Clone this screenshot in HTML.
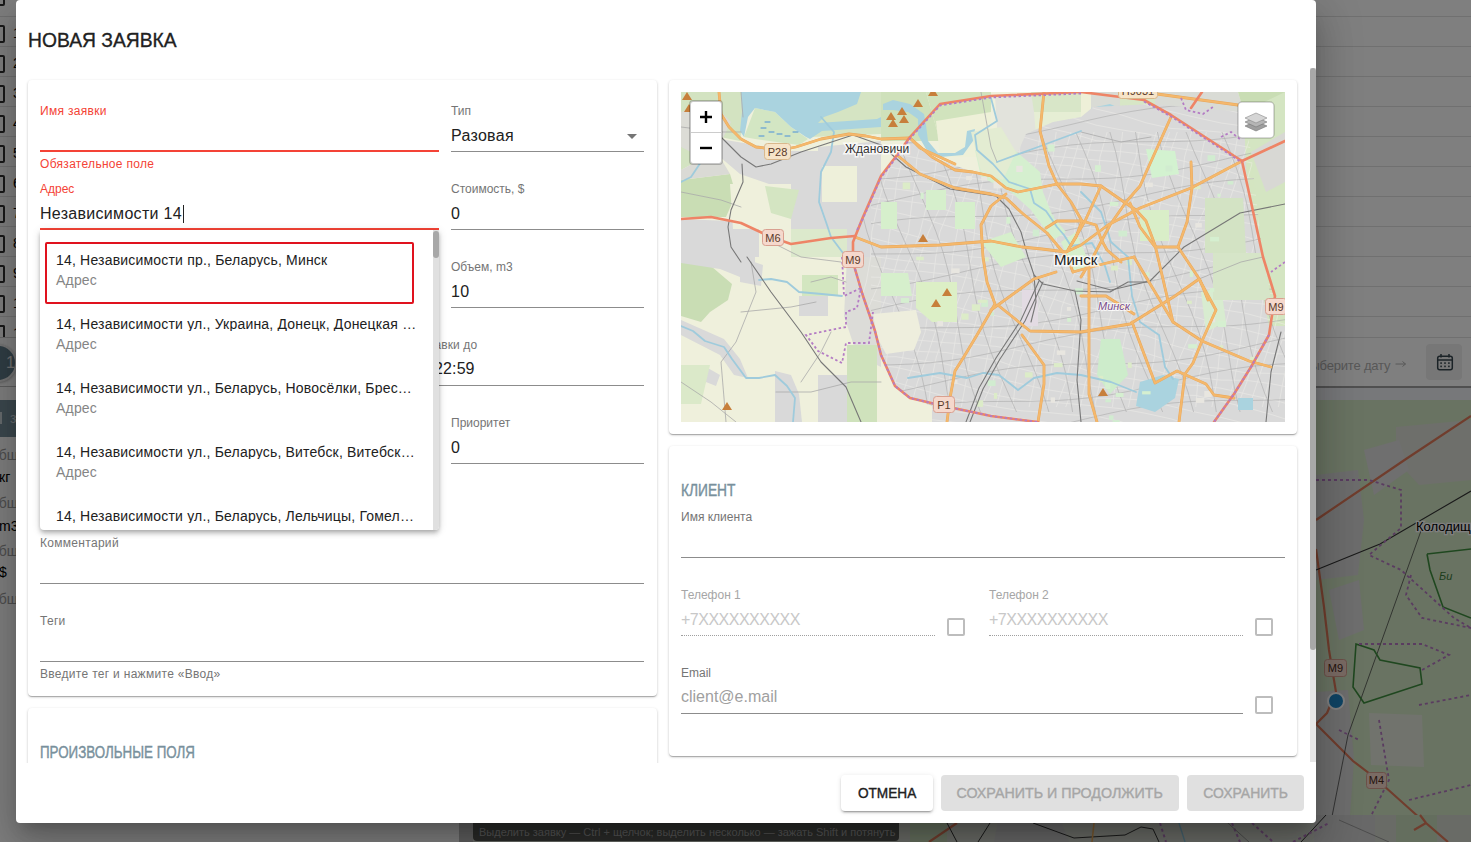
<!DOCTYPE html>
<html><head><meta charset="utf-8">
<style>
*{box-sizing:border-box;margin:0;padding:0}
html,body{width:1471px;height:842px;overflow:hidden;font-family:"Liberation Sans",sans-serif;background:#7f7f7f;position:relative}
#bg{position:absolute;left:0;top:0;width:1471px;height:842px;background:#7f7f7f;overflow:hidden}
.rl{position:absolute;left:0;width:1471px;height:1px;background:#e0e0e0}
.cbx{position:absolute;left:-13px;width:18px;height:18px;border:2px solid #333;border-radius:2px}
#dlg{position:absolute;left:16px;top:0px;width:1300px;height:823px;background:#fff;border-radius:4px;box-shadow:0 11px 15px -7px rgba(0,0,0,.2),0 24px 38px 3px rgba(0,0,0,.14),0 9px 46px 8px rgba(0,0,0,.12)}
.t{position:absolute;white-space:nowrap;line-height:1}
.card{position:absolute;background:#fff;border-radius:4px;box-shadow:0 1px 3px 0 rgba(0,0,0,.2),0 1px 1px 0 rgba(0,0,0,.14),0 2px 1px -1px rgba(0,0,0,.12)}
.lbl{font-size:12px;color:#757575;letter-spacing:0.3px}
.val{font-size:16px;color:#212121;letter-spacing:0.3px}
.ul{position:absolute;height:1px;background:#8c8c8c}
.err{color:#f44336}
.btn{position:absolute;font-size:15px;border-radius:4px;text-align:center;line-height:36px;white-space:nowrap}
.btn span{display:inline-block;-webkit-text-stroke:0.4px currentColor}
#scroll{position:absolute;left:16px;top:68px;width:1300px;height:695px;overflow:hidden}
#inner{position:absolute;left:-16px;top:-68px;width:1471px;height:842px}
.it{font-size:14px;color:#212121;letter-spacing:0.19px;width:361px;overflow:hidden;text-overflow:ellipsis}
.ad{font-size:14px;color:#858585;letter-spacing:0.19px}
.cb{position:absolute;width:18px;height:18px;border:2px solid #bdbdbd;border-radius:2px}
.hdr{font-size:16px;color:#78909c;-webkit-text-stroke:0.4px #78909c;transform-origin:0 0}
</style></head><body>
<div id="bg">
  <div style="position:absolute;left:0;top:0;width:1471px;height:842px;background:#fff"></div>
  <!-- table rows -->
  <div class="rl" style="top:16px"></div><div class="rl" style="top:46px"></div><div class="rl" style="top:76px"></div>
  <div class="rl" style="top:106px"></div><div class="rl" style="top:136px"></div><div class="rl" style="top:166px"></div>
  <div class="rl" style="top:196px"></div><div class="rl" style="top:226px"></div><div class="rl" style="top:256px"></div>
  <div class="rl" style="top:286px"></div><div class="rl" style="top:316px"></div>
  <div class="rl" style="top:337px;left:1316px;width:155px"></div>
  <div class="rl" style="top:337px;left:0;width:16px;background:#d0d0d0"></div>
  <!-- checkboxes left -->
  <div class="cbx" style="top:-12px"></div><div class="cbx" style="top:25px"></div><div class="cbx" style="top:55px"></div>
  <div class="cbx" style="top:85px"></div><div class="cbx" style="top:115px"></div><div class="cbx" style="top:145px"></div>
  <div class="cbx" style="top:175px"></div><div class="cbx" style="top:205px"></div><div class="cbx" style="top:235px"></div>
  <div class="cbx" style="top:265px"></div><div class="cbx" style="top:295px"></div><div class="cbx" style="top:325px;height:12px;border-bottom:none;border-radius:2px 2px 0 0"></div>
  <div class="t" style="left:13px;top:26px;font-size:14px;color:#000">1</div>
  <div class="t" style="left:13px;top:56px;font-size:14px;color:#000">2</div>
  <div class="t" style="left:13px;top:86px;font-size:14px;color:#000">3</div>
  <div class="t" style="left:13px;top:116px;font-size:14px;color:#000">4</div>
  <div class="t" style="left:13px;top:146px;font-size:14px;color:#000">5</div>
  <div class="t" style="left:13px;top:176px;font-size:14px;color:#000">6</div>
  <div class="t" style="left:13px;top:206px;font-size:14px;color:#000">7</div>
  <div class="t" style="left:13px;top:236px;font-size:14px;color:#000">8</div>
  <div class="t" style="left:13px;top:266px;font-size:14px;color:#000">9</div>
  <div class="t" style="left:13px;top:296px;font-size:14px;color:#000">1</div>
  <div style="position:absolute;left:0;top:316px;width:459px;height:21px;overflow:hidden"><div class="t" style="left:13px;top:10px;font-size:14px;color:#000">1</div></div>
  <!-- pagination circle -->
  <div style="position:absolute;left:-21px;top:344px;width:38px;height:38px;border-radius:50%;background:#607d8b;border:2px solid #e8e8e8;box-shadow:0 1px 3px rgba(0,0,0,.3)"></div>
  <div class="t" style="left:6px;top:355px;font-size:16px;color:#e0e0e0">1</div>
  <div style="position:absolute;left:0;top:386px;width:459px;height:1px;background:#bdbdbd"></div>
  <!-- dark band -->
  <div style="position:absolute;left:0;top:400px;width:459px;height:37px;background:#78909c"></div>
  <div class="t" style="left:10px;top:411px;font-size:14px;color:#cfd8dc">з</div>
  <div style="position:absolute;left:0;top:412px;width:2px;height:12px;background:#cfd8dc"></div>
  <div class="t" style="left:-9px;top:448px;font-size:14px;color:#9e9e9e">общ</div>
  <div class="t" style="left:-1px;top:470px;font-size:14px;color:#000">кг</div>
  <div class="t" style="left:-9px;top:496px;font-size:14px;color:#9e9e9e">общ</div>
  <div class="t" style="left:-1px;top:519px;font-size:14px;color:#000">m3</div>
  <div class="t" style="left:-9px;top:544px;font-size:14px;color:#9e9e9e">общ</div>
  <div class="t" style="left:-1px;top:565px;font-size:14px;color:#000">$</div>
  <div class="t" style="left:-9px;top:592px;font-size:14px;color:#9e9e9e">общ</div>
  <!-- right date row -->
  <div class="t" style="left:1302px;top:359px;font-size:13px;color:#b0b0b0;letter-spacing:-0.2px">Выберите дату</div>
  <svg style="position:absolute;left:1395px;top:360px" width="12" height="8"><path d="M0.5 4 H10.5 M7.5 1.5 L10.5 4 L7.5 6.5" fill="none" stroke="#b0b0b0" stroke-width="1"/></svg>
  <div style="position:absolute;left:1426px;top:344px;width:36px;height:36px;border-radius:4px;background:#eeeeee"></div>
  <svg style="position:absolute;left:1436px;top:353px" width="18" height="18" viewBox="0 0 18 18"><rect x="1.7" y="3.2" width="14.6" height="13.6" rx="2" fill="none" stroke="#37474f" stroke-width="1.5"/><path d="M1.7 7 H16.3" stroke="#37474f" stroke-width="1.5"/><path d="M5 1 V4.5 M13 1 V4.5" stroke="#37474f" stroke-width="1.5"/><g fill="#37474f"><rect x="4.3" y="9.3" width="1.6" height="1.6"/><rect x="8.2" y="9.3" width="1.6" height="1.6"/><rect x="12.1" y="9.3" width="1.6" height="1.6"/><rect x="4.3" y="12.6" width="1.6" height="1.6"/><rect x="8.2" y="12.6" width="1.6" height="1.6"/><rect x="12.1" y="12.6" width="1.6" height="1.6"/></g></svg>
  <div style="position:absolute;left:1316px;top:386px;width:155px;height:2px;background:#a0a0a0"></div>
  <div style="position:absolute;left:1316px;top:388px;width:155px;height:12px;background:#eef1f4"></div>
  <!-- background map -->
  <div style="position:absolute;left:459px;top:400px;width:1012px;height:442px;background:#d5e7c6;overflow:hidden">
    <svg width="1012" height="442" style="position:absolute;left:0;top:0">
<rect width="1012" height="442" fill="#d3e6c5"/>
<path d="M0 0 L857 0 L857 442 L0 442 Z" fill="#d6dcd2"/>
<path d="M857 75 L899 70 L905 120 L899 175 L857 180 Z" fill="#d9d9d9"/>
<path d="M857 292 L889 290 L895 360 L889 442 L857 442 Z" fill="#dadada"/>
<path d="M910 313 L963 315 L965 367 L912 365 Z" fill="#e2e6da"/>
<path d="M937 27 L1012 20 L1012 80 L960 85 L937 60 Z" fill="#dcdfd6"/>
<path d="M905 50 L940 40 L950 70 L915 95 Z" fill="#dedede"/>
<path d="M870 190 L900 180 L905 230 L880 240 Z" fill="#dcdcdc"/>
<path d="M857 120 L947 59 L1012 16" fill="none" stroke="#e07a5a" stroke-width="2.2"/>
<path d="M857 149 L865 207 L870 250 L877 292 L868 313 L857 324" fill="none" stroke="#e07a5a" stroke-width="2.2"/>
<path d="M857 324 L894 361 L915 377 L963 420 L995 442" fill="none" stroke="#e07a5a" stroke-width="2.2"/>
<path d="M857 170 L921 144 L1012 91" fill="none" stroke="#333" stroke-width="1.1"/>
<path d="M963 128 L889 335 L868 442" fill="none" stroke="#333" stroke-width="0.7"/>
<path d="M897 244 L915 250 L921 260 L961 268 L963 284 L905 303 L894 287 Z" fill="none" stroke="#3f8f3f" stroke-width="1.6"/>
<path d="M968 154 L1012 149 M1012 218 L984 207 L971 170 L968 154" fill="none" stroke="#3f8f3f" stroke-width="1.6"/>
<path d="M857 80 L910 80 L942 90 L942 128 L910 155 L942 170 L995 218 L1012 228 M952 175 L947 195 L963 218 L1012 228 M900 244 L963 244 L990 255 L963 270 M960 305 L1012 295 M920 320 L930 380 L910 420 M880 330 L900 340 M950 400 L1012 385" fill="none" stroke="#b478c0" stroke-width="1.8" stroke-dasharray="3 3"/>
<circle cx="877" cy="301" r="8" fill="#1e88c8" stroke="#fff" stroke-width="2"/>
<rect x="865.5" y="259.5" width="22" height="17" rx="3" fill="#f4d6c9" stroke="#d9a090"/><text x="876.5" y="272" text-anchor="middle" font-family="Liberation Sans" font-size="11" fill="#4a2a1a">M9</text>
<rect x="907.5" y="372.5" width="20" height="16" rx="3" fill="#f4d6c9" stroke="#d9a090"/><text x="917.5" y="384" text-anchor="middle" font-family="Liberation Sans" font-size="11" fill="#4a2a1a">M4</text>
<text x="957" y="131" font-family="Liberation Sans" font-size="13" fill="#000" stroke="#fff" stroke-width="2.5" paint-order="stroke">Колодищи</text>
<text x="980" y="180" font-family="Liberation Sans" font-size="11" font-style="italic" fill="#3a7a3a">Би</text>
<rect x="0" y="415" width="1012" height="27" fill="#d2d6cc"/>
<path d="M451 415 L488 415 L488 442 L451 442 Z" fill="#c9dcbb"/>
<path d="M540 415 L600 415 L610 442 L535 442 Z" fill="#cfcfcf"/>
<path d="M855 415 L916 415 L916 442 L855 442 Z" fill="#d0d0d0"/>
<path d="M937 415 L978 415 L978 442 L937 442 Z" fill="#c8dcbc"/>
<path d="M0 415 L14 415 L14 442 L0 442 Z" fill="#bfbfbf"/>
<path d="M498 423 L470 442" fill="none" stroke="#e07a5a" stroke-width="2.2"/>
<path d="M961 415 L967 423 L989 442 M967 423 L955 430" fill="none" stroke="#e07a5a" stroke-width="2.2"/>
<path d="M488 423 L498 442 M531 423 L519 442 M574 423 L615 438 L666 435 L682 427 L694 429 L700 442 M867 415 L842 442" fill="none" stroke="#333" stroke-width="1"/>
<path d="M635 423 L633 442" fill="none" stroke="#f0b060" stroke-width="1.6"/>
<path d="M720 423 L726 442" fill="none" stroke="#8cc4dc" stroke-width="1.4"/>
<path d="M701 423 L707 442 M773 423 L781 442 M793 423 L814 442 M834 442 L870 423" fill="none" stroke="#b478c0" stroke-width="2" stroke-dasharray="3 3"/>
<path d="M760 415 L790 442 M880 420 L930 442" fill="none" stroke="#999" stroke-width="1"/>
</svg>

  </div>
  <div style="position:absolute;left:473px;top:816px;width:426px;height:25px;border-radius:4px;background:rgba(0,0,0,.6)"></div>
  <div class="t" style="left:479px;top:827px;font-size:11px;color:#a8a8a8">Выделить заявку — Ctrl + щелчок; выделить несколько — зажать Shift и потянуть</div>
  <div style="position:absolute;left:0;top:0;width:1471px;height:842px;background:rgba(0,0,0,.5)"></div>
</div>
<div id="dlg"></div>
<div class="t" style="left:28px;top:29px;font-size:21px;color:#212121;-webkit-text-stroke:0.35px #212121;transform:scaleX(0.918);transform-origin:0 0">НОВАЯ ЗАЯВКА</div>
<div id="scroll"><div id="inner">
  <!-- left card -->
  <div class="card" style="left:28px;top:80px;width:629px;height:616px"></div>
  <div class="t lbl err" style="left:40px;top:105px">Имя заявки</div>
  <div class="ul" style="left:40px;top:150px;width:399px;height:2px;background:#f44336"></div>
  <div class="t lbl err" style="left:40px;top:158px">Обязательное поле</div>
  <div class="t lbl err" style="left:40px;top:183px;letter-spacing:0">Адрес</div>
  <div class="t val" style="left:40px;top:206px">Независимости 14</div>
  <div style="position:absolute;left:183px;top:205px;width:1px;height:18px;background:#222"></div>
  <div class="ul" style="left:40px;top:228px;width:399px;height:2px;background:#f44336"></div>

  <div class="t lbl" style="left:451px;top:105px;letter-spacing:0">Тип</div>
  <div class="t val" style="left:451px;top:128px">Разовая</div>
  <svg style="position:absolute;left:627px;top:134px" width="10" height="5"><path d="M0 0 L10 0 L5 5 Z" fill="#757575"/></svg>
  <div class="ul" style="left:451px;top:151px;width:193px"></div>
  <div class="t lbl" style="left:451px;top:183px;letter-spacing:0">Стоимость, $</div>
  <div class="t val" style="left:451px;top:206px">0</div>
  <div class="ul" style="left:451px;top:229px;width:193px"></div>
  <div class="t lbl" style="left:451px;top:261px;letter-spacing:0">Объем, m3</div>
  <div class="t val" style="left:451px;top:284px">10</div>
  <div class="ul" style="left:451px;top:307px;width:193px"></div>
  <div class="t lbl" style="left:369px;top:339px;letter-spacing:0.1px">Время доставки до</div>
  <div class="t val" style="left:389px;top:361px;letter-spacing:0.1px">31.12 22:59</div>
  <div class="ul" style="left:400px;top:385px;width:244px"></div>
  <div class="t lbl" style="left:451px;top:417px;letter-spacing:0">Приоритет</div>
  <div class="t val" style="left:451px;top:440px">0</div>
  <div class="ul" style="left:451px;top:463px;width:193px"></div>

  <div class="t lbl" style="left:40px;top:537px">Комментарий</div>
  <div class="ul" style="left:40px;top:583px;width:604px"></div>
  <div class="t lbl" style="left:40px;top:615px">Теги</div>
  <div class="ul" style="left:40px;top:661px;width:604px"></div>
  <div class="t lbl" style="left:40px;top:668px">Введите тег и нажмите «Ввод»</div>

  <div class="card" style="left:28px;top:708px;width:629px;height:200px"></div>
  <div class="t hdr" style="left:40px;top:745px;transform:scaleX(0.835)">ПРОИЗВОЛЬНЫЕ ПОЛЯ</div>

  <!-- dropdown -->
  <div class="card" style="left:40px;top:230px;width:399px;height:300px;border-radius:0 0 4px 4px;overflow:hidden;box-shadow:0 2px 4px -1px rgba(0,0,0,.2),0 4px 5px 0 rgba(0,0,0,.14),0 1px 10px 0 rgba(0,0,0,.12)">
    <div style="position:absolute;left:393px;top:0;width:6px;height:300px;background:#e0e0e0"></div>
    <div style="position:absolute;left:393px;top:1px;width:6px;height:27px;background:#a8a8a8;border-radius:3px"></div>
  </div>
  <div style="position:absolute;left:45px;top:242px;width:369px;height:62px;border:2px solid #e0121e;border-radius:2px"></div>
  <div class="t it" style="left:56px;top:253px">14, Независимости пр., Беларусь, Минск</div>
  <div class="t ad" style="left:56px;top:273px">Адрес</div>
  <div class="t it" style="left:56px;top:317px">14, Независимости ул., Украина, Донецк, Донецкая область</div>
  <div class="t ad" style="left:56px;top:337px">Адрес</div>
  <div class="t it" style="left:56px;top:381px">14, Независимости ул., Беларусь, Новосёлки, Брестская</div>
  <div class="t ad" style="left:56px;top:401px">Адрес</div>
  <div class="t it" style="left:56px;top:445px">14, Независимости ул., Беларусь, Витебск, Витебская область</div>
  <div class="t ad" style="left:56px;top:465px">Адрес</div>
  <div class="t it" style="left:56px;top:509px">14, Независимости ул., Беларусь, Лельчицы, Гомельская</div>

  <!-- map card -->
  <div class="card" style="left:669px;top:80px;width:628px;height:354px"></div>
  <div id="map" style="position:absolute;left:681px;top:92px;width:604px;height:330px;background:#e6e3dc;overflow:hidden"><svg width="604" height="330" viewBox="0 0 604 330" style="position:absolute;left:0;top:0">
<rect width="604" height="330" fill="#eff0dc"/>
<path d="M0.0 0.0 L60.0 0.0 L62.0 30.0 L59.0 49.0 L39.0 45.0 L24.0 65.0 L0.0 78.0 Z" fill="#d3e3c1" />
<path d="M0.0 20.0 L30.0 10.0 L50.0 30.0 L40.0 50.0 L10.0 60.0 L0.0 55.0 Z" fill="#dcdcd6" />
<path d="M0.0 88.0 L49.0 82.0 L55.0 102.0 L45.0 125.0 L0.0 125.0 Z" fill="#c9ddb4" />
<path d="M0.0 78.0 L24.0 65.0 L39.0 65.0 L49.0 82.0 L0.0 88.0 Z" fill="#dadad5" />
<path d="M74.0 16.0 L94.0 20.0 L110.0 35.0 L127.0 47.0 L118.0 53.0 L74.0 47.0 L63.0 45.0 Z" fill="#d3e6c3" />
<path d="M39.0 47.0 L110.0 59.0 L137.0 59.0 L137.0 137.0 L110.0 137.0 L88.0 92.0 L59.0 82.0 L39.0 65.0 Z" fill="#d9d9d9" />
<path d="M137.0 55.0 L200.0 49.0 L200.0 165.0 L166.0 165.0 L137.0 137.0 Z" fill="#d9d9d9" />
<path d="M0.0 127.0 L49.0 129.0 L78.0 137.0 L78.0 165.0 L0.0 165.0 Z" fill="#d9d9d9" />
<path d="M49.0 92.0 L110.0 92.0 L110.0 137.0 L52.0 137.0 Z" fill="#eff0dc" />
<path d="M141.0 74.0 L176.0 74.0 L176.0 110.0 L141.0 110.0 Z" fill="#eef0da" />
<path d="M84.0 94.0 L118.0 98.0 L110.0 127.0 L90.0 121.0 Z" fill="#d4e5c2" />
<path d="M110.0 137.0 L166.0 137.0 L166.0 165.0 L110.0 165.0 Z" fill="#dce9cc" />
<path d="M130.0 0.0 L200.0 0.0 L200.0 42.0 L130.0 45.0 Z" fill="#d5e4c3" />
<path d="M60.0 0.0 L180.0 0.0 L176.0 12.0 L157.0 20.0 L143.0 25.0 L137.0 31.0 L196.0 27.0 L200.0 25.0 L200.0 35.0 L141.0 39.0 L129.0 47.0 L125.0 45.0 L110.0 35.0 L94.0 20.0 L74.0 16.0 L67.0 25.0 L63.0 45.0 L59.0 39.0 L61.0 20.0 Z" fill="#aad3df" />
<path d="M80.0 36.0 L85.0 36.0" fill="none" stroke="#4a90d9" stroke-width="1" stroke-linecap="round" stroke-linejoin="round" />
<path d="M88.0 40.0 L93.0 40.0" fill="none" stroke="#4a90d9" stroke-width="1" stroke-linecap="round" stroke-linejoin="round" />
<path d="M78.0 44.0 L83.0 44.0" fill="none" stroke="#4a90d9" stroke-width="1" stroke-linecap="round" stroke-linejoin="round" />
<path d="M96.0 42.0 L101.0 42.0" fill="none" stroke="#4a90d9" stroke-width="1" stroke-linecap="round" stroke-linejoin="round" />
<path d="M104.0 44.0 L109.0 44.0" fill="none" stroke="#4a90d9" stroke-width="1" stroke-linecap="round" stroke-linejoin="round" />
<path d="M112.0 40.0 L117.0 40.0" fill="none" stroke="#4a90d9" stroke-width="1" stroke-linecap="round" stroke-linejoin="round" />
<path d="M84.0 30.0 L89.0 30.0" fill="none" stroke="#4a90d9" stroke-width="1" stroke-linecap="round" stroke-linejoin="round" />
<path d="M200.0 0.0 L245.0 0.0 L259.0 49.0 L200.0 49.0 Z" fill="#cfe1bb" />
<path d="M245.0 0.0 L310.0 0.0 L310.0 39.0 L286.0 39.0 L259.0 49.0 Z" fill="#d1e3bd" />
<path d="M255.0 29.0 L310.0 20.0 L310.0 65.0 L259.0 65.0 Z" fill="#eef0d8" />
<path d="M314.0 4.0 L353.0 4.0 L357.0 63.0 L318.0 65.0 Z" fill="#e2e3dc" />
<path d="M353.0 20.0 L400.0 20.0 L400.0 74.0 L357.0 69.0 Z" fill="#e6eed4" />
<path d="M350.0 0.0 L400.0 0.0 L400.0 20.0 L353.0 20.0 Z" fill="#d8e6c8" />
<path d="M202.0 12.0 L212.0 8.0 L229.0 12.0 L243.0 22.0 L245.0 33.0 L247.0 49.0 L257.0 61.0 L274.0 61.0 L284.0 55.0 L286.0 39.0 L294.0 37.0 L292.0 49.0 L282.0 63.0 L259.0 65.0 L245.0 57.0 L237.0 43.0 L237.0 27.0 L227.0 20.0 L212.0 18.0 L202.0 18.0 Z" fill="#aad3df" />
<path d="M400.0 0.0 L410.0 0.0 L410.0 55.0 L400.0 55.0 Z" fill="#eef0d8" />
<path d="M410.0 0.0 L557.0 0.0 L563.0 20.0 L470.0 45.0 L439.0 45.0 L410.0 55.0 Z" fill="#d9dbd5" />
<path d="M439.0 6.0 L474.0 6.0 L474.0 45.0 L439.0 45.0 Z" fill="#d7e6c6" />
<path d="M557.0 0.0 L604.0 0.0 L604.0 20.0 L563.0 20.0 Z" fill="#c9ddb4" />
<path d="M410.0 16.0 L429.0 12.0 L443.0 18.0 L439.0 25.0 L429.0 29.0 L425.0 39.0 L416.0 43.0 L412.0 35.0 L418.0 27.0 L412.0 22.0 Z" fill="#aad3df" />
<path d="M229.0 46.0 L251.0 65.0 L292.0 80.0 L322.0 90.0 L336.0 62.0 L345.0 42.0 L372.0 30.0 L400.0 25.0 L412.0 15.0 L470.0 12.0 L563.0 20.0 L570.0 60.0 L582.0 165.0 L594.0 204.0 L604.0 215.0 L604.0 330.0 L251.0 330.0 L251.0 314.0 L229.0 306.0 L214.0 294.0 L200.0 263.0 L194.0 239.0 L182.0 204.0 L174.0 177.0 L175.0 150.0 L182.0 125.0 L200.0 84.0 L216.0 63.0 Z" fill="#d9d9d9" />
<path d="M200.0 165.0 L166.0 165.0 L163.0 224.0 L176.0 263.0 L200.0 275.0 Z" fill="#dcdcd8" />
<path d="M563.0 20.0 L604.0 0.0 L604.0 165.0 L582.0 165.0 L565.0 78.0 Z" fill="#d4e5c2" />
<path d="M537.0 165.0 L604.0 165.0 L604.0 234.0 L588.0 234.0 L582.0 204.0 L537.0 194.0 Z" fill="#d4e5c2" />
<path d="M570.0 60.0 L604.0 40.0 L604.0 90.0 L585.0 100.0 Z" fill="#d8d8d4" />
<path d="M0.0 171.0 L24.0 169.0 L51.0 192.0 L47.0 208.0 L29.0 220.0 L20.0 230.0 L0.0 224.0 Z" fill="#c9ddb4" />
<path d="M0.0 165.0 L74.0 165.0 L74.0 192.0 L59.0 185.0 L39.0 177.0 L0.0 171.0 Z" fill="#d9d9d9" />
<path d="M0.0 228.0 L43.0 247.0 L59.0 267.0 L67.0 286.0 L53.0 283.0 L39.0 263.0 L0.0 243.0 Z" fill="#d9d9d9" />
<path d="M94.0 279.0 L110.0 283.0 L118.0 302.0 L121.0 330.0 L94.0 330.0 Z" fill="#d9d9d9" />
<path d="M137.0 283.0 L176.0 283.0 L176.0 330.0 L137.0 330.0 Z" fill="#d9d9d9" />
<path d="M25.0 275.0 L39.0 283.0 L35.0 294.0 L25.0 290.0 Z" fill="#d9d9d9" />
<path d="M59.0 165.0 L82.0 173.0 L80.0 194.0 L59.0 190.0 Z" fill="#d9d9d9" />
<path d="M118.0 204.0 L147.0 204.0 L147.0 224.0 L118.0 224.0 Z" fill="#d9d9d9" />
<path d="M121.0 183.0 L157.0 183.0 L157.0 204.0 L121.0 204.0 Z" fill="#d3e6c0" />
<path d="M166.0 253.0 L196.0 253.0 L196.0 330.0 L166.0 330.0 Z" fill="#cfe2bc" />
<path d="M0.0 273.0 L29.0 273.0 L20.0 312.0 L0.0 312.0 Z" fill="#dbe9c9" />
<clipPath id="cc"><path d="M229.0 46.0 L251.0 65.0 L292.0 80.0 L322.0 90.0 L336.0 62.0 L345.0 42.0 L372.0 30.0 L400.0 25.0 L412.0 15.0 L470.0 12.0 L563.0 20.0 L570.0 60.0 L582.0 165.0 L594.0 204.0 L604.0 215.0 L604.0 330.0 L251.0 330.0 L251.0 314.0 L229.0 306.0 L214.0 294.0 L200.0 263.0 L194.0 239.0 L182.0 204.0 L174.0 177.0 L175.0 150.0 L182.0 125.0 L200.0 84.0 L216.0 63.0 Z"/></clipPath>
<g clip-path="url(#cc)" fill="none" stroke="#f3f1ec" stroke-width="0.8" opacity="0.55">
<path d="M190.0 -162.6 L215.0 -159.1 L240.0 -155.1 L265.0 -155.0 L290.0 -151.2 L315.0 -147.9 L340.0 -143.2 L365.0 -135.0 L390.0 -129.3 L415.0 -121.9 L440.0 -118.5 L465.0 -115.6 L490.0 -112.6 L515.0 -109.3 L540.0 -108.1 L565.0 -102.7 L590.0 -94.9 L615.0 -86.8"/>
<path d="M190.0 -150.1 L215.0 -148.6 L240.0 -144.9 L265.0 -144.7 L290.0 -137.6 L315.0 -133.0 L340.0 -126.3 L365.0 -119.6 L390.0 -113.6 L415.0 -108.4 L440.0 -108.0 L465.0 -104.9 L490.0 -102.2 L515.0 -98.8 L540.0 -92.4 L565.0 -86.9 L590.0 -79.9 L615.0 -73.5"/>
<path d="M190.0 -140.6 L215.0 -139.0 L240.0 -135.6 L265.0 -129.2 L290.0 -122.8 L315.0 -116.1 L340.0 -108.4 L365.0 -104.1 L390.0 -102.5 L415.0 -99.6 L440.0 -97.7 L465.0 -93.3 L490.0 -88.8 L515.0 -83.6 L540.0 -74.3 L565.0 -70.3 L590.0 -64.3 L615.0 -59.9"/>
<path d="M190.0 -131.9 L215.0 -126.2 L240.0 -121.3 L265.0 -112.3 L290.0 -105.2 L315.0 -100.3 L340.0 -95.6 L365.0 -95.0 L390.0 -92.0 L415.0 -89.7 L440.0 -85.7 L465.0 -80.3 L490.0 -72.1 L515.0 -64.8 L540.0 -60.2 L565.0 -55.3 L590.0 -54.5 L615.0 -50.7"/>
<path d="M190.0 -116.6 L215.0 -108.8 L240.0 -102.2 L265.0 -97.5 L290.0 -92.5 L315.0 -88.6 L340.0 -88.6 L365.0 -85.3 L390.0 -82.9 L415.0 -78.2 L440.0 -71.8 L465.0 -62.6 L490.0 -57.8 L515.0 -52.3 L540.0 -48.4 L565.0 -44.8 L590.0 -45.2 L615.0 -41.4"/>
<path d="M190.0 -100.3 L215.0 -92.5 L240.0 -87.1 L265.0 -83.1 L290.0 -82.5 L315.0 -80.2 L340.0 -77.9 L365.0 -72.3 L390.0 -66.3 L415.0 -61.8 L440.0 -54.7 L465.0 -48.5 L490.0 -44.1 L515.0 -40.6 L540.0 -38.4 L565.0 -37.2 L590.0 -34.5 L615.0 -28.0"/>
<path d="M190.0 -84.8 L215.0 -79.4 L240.0 -75.2 L265.0 -74.0 L290.0 -72.5 L315.0 -69.1 L340.0 -64.0 L365.0 -59.5 L390.0 -49.8 L415.0 -43.4 L440.0 -37.9 L465.0 -34.6 L490.0 -33.6 L515.0 -31.7 L540.0 -29.9 L565.0 -23.9 L590.0 -19.6 L615.0 -12.6"/>
<path d="M190.0 -72.5 L215.0 -70.2 L240.0 -67.8 L265.0 -66.3 L290.0 -62.5 L315.0 -56.3 L340.0 -49.6 L365.0 -41.7 L390.0 -36.6 L415.0 -29.6 L440.0 -27.6 L465.0 -27.1 L490.0 -24.7 L515.0 -20.9 L540.0 -15.7 L565.0 -9.8 L590.0 -0.5 L615.0 6.5"/>
<path d="M190.0 -62.1 L215.0 -60.0 L240.0 -58.1 L265.0 -53.3 L290.0 -46.2 L315.0 -39.3 L340.0 -30.9 L365.0 -27.5 L390.0 -24.3 L415.0 -19.3 L440.0 -18.7 L465.0 -17.2 L490.0 -11.7 L515.0 -7.3 L540.0 1.2 L565.0 9.5 L590.0 15.0 L615.0 18.6"/>
<path d="M190.0 -53.1 L215.0 -48.9 L240.0 -43.9 L265.0 -35.2 L290.0 -28.8 L315.0 -21.9 L340.0 -18.7 L365.0 -16.2 L390.0 -12.5 L415.0 -9.9 L440.0 -6.9 L465.0 -1.9 L490.0 4.7 L515.0 11.6 L540.0 16.6 L565.0 22.5 L590.0 25.3 L615.0 26.4"/>
<path d="M190.0 -41.1 L215.0 -34.0 L240.0 -26.9 L265.0 -18.8 L290.0 -12.6 L315.0 -10.5 L340.0 -6.8 L365.0 -4.7 L390.0 -2.2 L415.0 0.2 L440.0 5.7 L465.0 12.7 L490.0 19.6 L515.0 25.5 L540.0 31.0 L565.0 34.4 L590.0 36.1 L615.0 37.3"/>
<path d="M190.0 -23.1 L215.0 -15.6 L240.0 -11.5 L265.0 -5.2 L290.0 -1.6 L315.0 -0.0 L340.0 2.0 L365.0 4.5 L390.0 8.6 L415.0 17.0 L440.0 22.8 L465.0 30.8 L490.0 36.4 L515.0 38.0 L540.0 40.2 L565.0 43.7 L590.0 45.9 L615.0 48.7"/>
<path d="M190.0 -8.1 L215.0 -2.6 L240.0 3.4 L265.0 5.5 L290.0 5.3 L315.0 9.9 L340.0 14.5 L365.0 19.4 L390.0 25.4 L415.0 33.1 L440.0 37.8 L465.0 41.7 L490.0 47.2 L515.0 48.1 L540.0 50.0 L565.0 54.8 L590.0 58.7 L615.0 66.7"/>
<path d="M190.0 7.8 L215.0 8.9 L240.0 11.0 L265.0 13.2 L290.0 16.3 L315.0 22.3 L340.0 27.8 L365.0 35.4 L390.0 41.2 L415.0 48.7 L440.0 50.5 L465.0 52.9 L490.0 55.2 L515.0 59.0 L540.0 62.0 L565.0 69.6 L590.0 75.4 L615.0 82.4"/>
<path d="M190.0 17.2 L215.0 17.6 L240.0 21.3 L265.0 24.6 L290.0 29.8 L315.0 39.2 L340.0 44.4 L365.0 51.3 L390.0 56.4 L415.0 58.6 L440.0 59.7 L465.0 62.5 L490.0 66.2 L515.0 72.1 L540.0 76.8 L565.0 85.3 L590.0 90.8 L615.0 95.8"/>
<path d="M190.0 27.2 L215.0 29.6 L240.0 34.7 L265.0 41.7 L290.0 49.3 L315.0 54.6 L340.0 60.3 L365.0 63.5 L390.0 65.7 L415.0 68.1 L440.0 70.2 L465.0 74.8 L490.0 80.7 L515.0 89.1 L540.0 95.3 L565.0 101.6 L590.0 105.8 L615.0 106.2"/>
<path d="M190.0 38.2 L215.0 45.1 L240.0 51.7 L265.0 56.7 L290.0 62.7 L315.0 68.0 L340.0 69.7 L365.0 72.1 L390.0 73.8 L415.0 79.0 L440.0 84.6 L465.0 91.6 L490.0 96.5 L515.0 104.7 L540.0 109.4 L565.0 111.1 L590.0 115.3 L615.0 117.5"/>
<path d="M190.0 52.5 L215.0 61.8 L240.0 66.9 L265.0 72.5 L290.0 77.5 L315.0 79.3 L340.0 79.1 L365.0 82.6 L390.0 87.2 L415.0 92.6 L440.0 99.3 L465.0 106.6 L490.0 113.6 L515.0 115.6 L540.0 119.7 L565.0 121.2 L590.0 122.3 L615.0 127.0"/>
<path d="M190.0 70.5 L215.0 76.3 L240.0 79.5 L265.0 85.0 L290.0 86.3 L315.0 89.0 L340.0 89.8 L365.0 95.5 L390.0 101.4 L415.0 110.8 L440.0 115.8 L465.0 120.3 L490.0 124.5 L515.0 128.0 L540.0 129.7 L565.0 130.9 L590.0 135.2 L615.0 143.8"/>
<path d="M190.0 85.2 L215.0 89.2 L240.0 89.6 L265.0 91.4 L290.0 95.9 L315.0 99.4 L340.0 104.3 L365.0 113.9 L390.0 120.0 L415.0 126.3 L440.0 128.3 L465.0 133.2 L490.0 132.7 L515.0 137.4 L540.0 139.9 L565.0 145.0 L590.0 152.4 L615.0 160.7"/>
<path d="M190.0 95.5 L215.0 97.0 L240.0 100.3 L265.0 102.7 L290.0 107.4 L315.0 114.2 L340.0 121.0 L365.0 128.0 L390.0 133.4 L415.0 136.7 L440.0 140.2 L465.0 140.7 L490.0 144.2 L515.0 147.8 L540.0 154.5 L565.0 160.6 L590.0 168.2 L615.0 173.0"/>
<path d="M190.0 106.0 L215.0 108.1 L240.0 111.2 L265.0 117.9 L290.0 126.3 L315.0 130.8 L340.0 138.9 L365.0 141.9 L390.0 144.7 L415.0 147.6 L440.0 148.5 L465.0 152.5 L490.0 158.5 L515.0 166.1 L540.0 171.3 L565.0 179.1 L590.0 183.5 L615.0 186.3"/>
<path d="M190.0 115.8 L215.0 120.6 L240.0 126.2 L265.0 133.6 L290.0 140.1 L315.0 147.2 L340.0 149.1 L365.0 151.0 L390.0 152.7 L415.0 157.8 L440.0 162.3 L465.0 167.9 L490.0 173.8 L515.0 180.6 L540.0 186.4 L565.0 190.8 L590.0 192.3 L615.0 195.0"/>
<path d="M190.0 129.7 L215.0 138.7 L240.0 145.8 L265.0 150.5 L290.0 153.9 L315.0 158.7 L340.0 158.6 L365.0 161.0 L390.0 163.5 L415.0 170.0 L440.0 177.0 L465.0 184.2 L490.0 189.7 L515.0 195.4 L540.0 197.0 L565.0 199.8 L590.0 201.3 L615.0 205.3"/>
<path d="M190.0 145.8 L215.0 152.3 L240.0 158.4 L265.0 161.6 L290.0 164.9 L315.0 166.6 L340.0 170.0 L365.0 174.2 L390.0 180.4 L415.0 188.0 L440.0 193.4 L465.0 198.9 L490.0 204.9 L515.0 204.8 L540.0 208.4 L565.0 210.6 L590.0 212.7 L615.0 220.7"/>
<path d="M190.0 164.0 L215.0 167.6 L240.0 170.6 L265.0 172.8 L290.0 172.9 L315.0 177.6 L340.0 182.8 L365.0 190.4 L390.0 197.5 L415.0 204.0 L440.0 208.2 L465.0 212.3 L490.0 213.7 L515.0 215.7 L540.0 217.3 L565.0 221.4 L590.0 228.1 L615.0 235.9"/>
<path d="M190.0 173.8 L215.0 178.2 L240.0 179.3 L265.0 182.2 L290.0 186.5 L315.0 192.7 L340.0 199.2 L365.0 204.7 L390.0 212.8 L415.0 216.7 L440.0 218.5 L465.0 220.4 L490.0 223.2 L515.0 225.2 L540.0 232.8 L565.0 238.2 L590.0 244.7 L615.0 251.5"/>
<path d="M190.0 185.1 L215.0 185.7 L240.0 190.7 L265.0 196.6 L290.0 201.8 L315.0 208.6 L340.0 215.4 L365.0 221.0 L390.0 224.5 L415.0 226.1 L440.0 228.1 L465.0 229.4 L490.0 234.3 L515.0 240.9 L540.0 249.4 L565.0 254.9 L590.0 261.2 L615.0 263.3"/>
<path d="M190.0 193.0 L215.0 197.9 L240.0 205.1 L265.0 212.2 L290.0 219.1 L315.0 223.8 L340.0 228.6 L365.0 231.0 L390.0 232.8 L415.0 234.1 L440.0 240.2 L465.0 243.6 L490.0 252.7 L515.0 259.7 L540.0 263.2 L565.0 269.2 L590.0 273.3 L615.0 275.6"/>
<path d="M190.0 207.5 L215.0 213.5 L240.0 220.5 L265.0 229.3 L290.0 232.1 L315.0 236.5 L340.0 237.3 L365.0 240.3 L390.0 244.5 L415.0 246.7 L440.0 255.0 L465.0 261.1 L490.0 269.1 L515.0 274.1 L540.0 276.5 L565.0 280.8 L590.0 281.4 L615.0 282.6"/>
<path d="M190.0 222.5 L215.0 231.0 L240.0 236.8 L265.0 240.5 L290.0 242.6 L315.0 245.1 L340.0 247.3 L365.0 252.5 L390.0 255.4 L415.0 264.5 L440.0 271.9 L465.0 276.0 L490.0 283.1 L515.0 285.5 L540.0 288.1 L565.0 288.3 L590.0 291.7 L615.0 296.7"/>
<path d="M190.0 241.9 L215.0 245.7 L240.0 248.4 L265.0 250.7 L290.0 252.2 L315.0 254.4 L340.0 259.0 L365.0 267.4 L390.0 272.9 L415.0 281.7 L440.0 285.2 L465.0 289.1 L490.0 292.3 L515.0 293.2 L540.0 296.2 L565.0 301.9 L590.0 307.4 L615.0 314.1"/>
<path d="M190.0 254.0 L215.0 257.5 L240.0 259.5 L265.0 260.5 L290.0 264.7 L315.0 268.0 L340.0 276.8 L365.0 283.1 L390.0 290.4 L415.0 294.8 L440.0 296.8 L465.0 298.1 L490.0 302.7 L515.0 303.5 L540.0 309.3 L565.0 315.4 L590.0 322.4 L615.0 330.4"/>
<path d="M190.0 265.0 L215.0 264.7 L240.0 268.7 L265.0 272.1 L290.0 279.0 L315.0 285.6 L340.0 291.8 L365.0 297.5 L390.0 301.5 L415.0 306.1 L440.0 306.7 L465.0 308.3 L490.0 314.2 L515.0 320.2 L540.0 325.4 L565.0 331.6 L590.0 337.9 L615.0 342.0"/>
<path d="M190.0 272.5 L215.0 275.3 L240.0 281.0 L265.0 287.8 L290.0 295.8 L315.0 303.2 L340.0 307.7 L365.0 309.8 L390.0 311.8 L415.0 314.1 L440.0 316.7 L465.0 321.4 L490.0 326.9 L515.0 334.7 L540.0 343.5 L565.0 346.4 L590.0 351.1 L615.0 353.8"/>
<path d="M190.0 286.3 L215.0 290.4 L240.0 297.6 L265.0 304.5 L290.0 310.7 L315.0 314.8 L340.0 318.8 L365.0 320.3 L390.0 322.8 L415.0 324.1 L440.0 329.7 L465.0 338.6 L490.0 346.3 L515.0 351.2 L540.0 356.1 L565.0 357.2 L590.0 360.3 L615.0 364.0"/>
<path d="M190.0 301.9 L215.0 309.1 L240.0 315.9 L265.0 318.7 L290.0 321.5 L315.0 323.6 L340.0 326.7 L365.0 330.2 L390.0 335.7 L415.0 341.3 L440.0 348.2 L465.0 355.3 L490.0 359.9 L515.0 363.8 L540.0 364.6 L565.0 368.7 L590.0 369.6 L615.0 375.8"/>
<path d="M190.0 318.1 L215.0 322.8 L240.0 326.4 L265.0 329.3 L290.0 332.3 L315.0 334.8 L340.0 336.8 L365.0 342.2 L390.0 350.4 L415.0 357.7 L440.0 363.4 L465.0 367.5 L490.0 371.6 L515.0 371.7 L540.0 374.7 L565.0 378.4 L590.0 384.9 L615.0 390.5"/>
<path d="M190.0 333.1 L215.0 335.1 L240.0 336.5 L265.0 338.5 L290.0 343.5 L315.0 347.4 L340.0 352.5 L365.0 358.7 L390.0 367.0 L415.0 373.0 L440.0 376.0 L465.0 377.9 L490.0 380.9 L515.0 384.3 L540.0 386.2 L565.0 391.5 L590.0 399.4 L615.0 406.6"/>
<path d="M190.0 343.2 L215.0 343.6 L240.0 347.7 L265.0 351.2 L290.0 356.0 L315.0 361.9 L340.0 371.3 L365.0 375.6 L390.0 381.8 L415.0 383.0 L440.0 385.0 L465.0 388.6 L490.0 390.4 L515.0 397.4 L540.0 402.5 L565.0 408.7 L590.0 415.5 L615.0 421.2"/>
<path d="M190.0 352.3 L215.0 356.0 L240.0 358.2 L265.0 365.1 L290.0 371.7 L315.0 380.8 L340.0 383.9 L365.0 387.5 L390.0 389.9 L415.0 392.7 L440.0 396.7 L465.0 400.7 L490.0 406.0 L515.0 413.7 L540.0 420.6 L565.0 424.8 L590.0 428.8 L615.0 433.7"/>
<path d="M190.0 363.7 L215.0 367.0 L240.0 375.6 L265.0 381.9 L290.0 388.3 L315.0 392.9 L340.0 395.4 L365.0 396.9 L390.0 399.8 L415.0 403.1 L440.0 409.8 L465.0 413.8 L490.0 423.4 L515.0 427.8 L540.0 433.6 L565.0 438.5 L590.0 440.7 L615.0 441.4"/>
<path d="M190.0 376.5 L215.0 384.9 L240.0 391.5 L265.0 398.7 L290.0 400.5 L315.0 403.4 L340.0 406.8 L365.0 406.7 L390.0 411.8 L415.0 418.7 L440.0 425.4 L465.0 430.3 L490.0 436.4 L515.0 440.9 L540.0 446.3 L565.0 446.2 L590.0 449.8 L615.0 453.7"/>
<path d="M190.0 394.2 L215.0 400.4 L240.0 407.3 L265.0 409.4 L290.0 410.3 L315.0 413.7 L340.0 415.5 L365.0 420.2 L390.0 425.8 L415.0 435.2 L440.0 442.4 L465.0 446.9 L490.0 451.4 L515.0 450.9 L540.0 453.4 L565.0 456.8 L590.0 462.5 L615.0 468.5"/>
<path d="M190.0 409.6 L215.0 413.2 L240.0 416.2 L265.0 418.2 L290.0 421.9 L315.0 423.6 L340.0 431.1 L365.0 437.7 L390.0 445.1 L415.0 451.1 L440.0 455.1 L465.0 457.1 L490.0 459.0 L515.0 461.2 L540.0 465.9 L565.0 468.9 L590.0 475.8 L615.0 484.7"/>
<path d="M190.0 420.8 L215.0 422.3 L240.0 424.2 L265.0 428.8 L290.0 432.8 L315.0 441.1 L340.0 448.0 L365.0 455.1 L390.0 458.3 L415.0 461.4 L440.0 463.7 L465.0 466.8 L490.0 470.0 L515.0 473.4 L540.0 478.7 L565.0 486.3 L590.0 493.9 L615.0 499.9"/>
<path d="M190.0 431.6 L215.0 434.2 L240.0 437.5 L265.0 441.4 L290.0 450.4 L315.0 455.9 L340.0 462.9 L365.0 466.9 L390.0 470.9 L415.0 471.2 L440.0 473.5 L465.0 476.8 L490.0 481.5 L515.0 490.3 L540.0 496.5 L565.0 502.4 L590.0 507.7 L615.0 512.8"/>
<path d="M190.0 441.2 L215.0 445.0 L240.0 453.0 L265.0 459.7 L290.0 467.5 L315.0 470.3 L340.0 475.1 L365.0 478.5 L390.0 480.4 L415.0 483.2 L440.0 484.7 L465.0 491.3 L490.0 497.8 L515.0 505.0 L540.0 513.3 L565.0 516.4 L590.0 520.1 L615.0 520.3"/>
<path d="M190.0 456.1 L215.0 461.7 L240.0 468.2 L265.0 476.0 L290.0 481.2 L315.0 481.6 L340.0 485.0 L365.0 487.2 L390.0 489.2 L415.0 494.6 L440.0 500.5 L465.0 507.8 L490.0 514.6 L515.0 520.8 L540.0 524.4 L565.0 525.2 L590.0 526.5 L615.0 530.2"/>
<path d="M190.0 472.1 L215.0 477.5 L240.0 483.4 L265.0 486.9 L290.0 491.0 L315.0 492.1 L340.0 493.2 L365.0 497.4 L390.0 504.0 L415.0 511.5 L440.0 518.8 L465.0 523.1 L490.0 527.7 L515.0 532.0 L540.0 533.0 L565.0 534.8 L590.0 538.4 L615.0 545.7"/>
<path d="M136.3 40.0 L127.5 65.0 L118.3 90.0 L112.6 115.0 L110.4 140.0 L107.8 165.0 L101.1 190.0 L93.0 215.0 L85.1 240.0 L74.5 265.0 L67.2 290.0 L65.8 315.0"/>
<path d="M146.8 40.0 L139.8 65.0 L133.1 90.0 L131.3 115.0 L126.8 140.0 L120.7 165.0 L112.3 190.0 L104.3 215.0 L95.8 240.0 L90.3 265.0 L84.1 290.0 L82.8 315.0"/>
<path d="M158.6 40.0 L154.0 65.0 L149.9 90.0 L146.9 115.0 L141.9 140.0 L134.8 165.0 L122.7 190.0 L115.4 215.0 L110.5 240.0 L107.6 265.0 L102.2 290.0 L97.1 315.0"/>
<path d="M176.0 40.0 L173.1 65.0 L168.0 90.0 L160.6 115.0 L154.5 140.0 L143.3 165.0 L136.8 190.0 L130.6 215.0 L127.9 240.0 L122.7 265.0 L119.3 290.0 L109.6 315.0"/>
<path d="M192.2 40.0 L189.6 65.0 L182.9 90.0 L172.0 115.0 L162.6 140.0 L155.5 165.0 L150.9 190.0 L147.4 215.0 L143.2 240.0 L137.8 265.0 L130.8 290.0 L121.7 315.0"/>
<path d="M207.6 40.0 L202.1 65.0 L193.4 90.0 L181.9 115.0 L177.0 140.0 L170.4 165.0 L168.9 190.0 L165.0 215.0 L159.0 240.0 L149.3 265.0 L140.1 290.0 L132.5 315.0"/>
<path d="M221.5 40.0 L212.8 65.0 L203.1 90.0 L196.2 115.0 L190.8 140.0 L189.7 165.0 L185.3 190.0 L177.8 215.0 L170.4 240.0 L161.0 265.0 L152.4 290.0 L146.7 315.0"/>
<path d="M232.0 40.0 L222.0 65.0 L215.7 90.0 L212.8 115.0 L208.8 140.0 L205.5 165.0 L198.6 190.0 L187.9 215.0 L180.4 240.0 L171.5 265.0 L169.1 290.0 L166.2 315.0"/>
<path d="M243.3 40.0 L236.0 65.0 L233.8 90.0 L230.4 115.0 L227.4 140.0 L217.3 165.0 L210.1 190.0 L201.4 215.0 L193.9 240.0 L190.0 265.0 L185.3 290.0 L183.5 315.0"/>
<path d="M257.8 40.0 L256.0 65.0 L252.7 90.0 L245.2 115.0 L239.1 140.0 L230.0 165.0 L218.6 190.0 L213.1 215.0 L210.6 240.0 L205.9 265.0 L203.7 290.0 L194.6 315.0"/>
<path d="M276.3 40.0 L271.0 65.0 L266.4 90.0 L259.3 115.0 L247.6 140.0 L239.2 165.0 L234.1 190.0 L230.1 215.0 L226.2 240.0 L221.8 265.0 L214.1 290.0 L206.9 315.0"/>
<path d="M293.1 40.0 L287.6 65.0 L276.8 90.0 L269.0 115.0 L258.9 140.0 L254.8 165.0 L251.9 190.0 L247.8 215.0 L244.1 240.0 L235.1 265.0 L225.6 290.0 L217.7 315.0"/>
<path d="M305.3 40.0 L299.0 65.0 L288.4 90.0 L279.9 115.0 L276.2 140.0 L271.5 165.0 L270.3 190.0 L263.3 215.0 L254.3 240.0 L245.9 265.0 L236.5 290.0 L229.9 315.0"/>
<path d="M317.9 40.0 L306.5 65.0 L301.5 90.0 L295.2 115.0 L293.5 140.0 L290.8 165.0 L283.4 190.0 L274.9 215.0 L264.3 240.0 L255.3 265.0 L250.1 290.0 L247.2 315.0"/>
<path d="M328.1 40.0 L320.7 65.0 L316.8 90.0 L315.0 115.0 L308.7 140.0 L302.3 165.0 L294.6 190.0 L283.2 215.0 L275.5 240.0 L271.7 265.0 L267.9 290.0 L265.2 315.0"/>
<path d="M340.5 40.0 L337.7 65.0 L334.8 90.0 L329.3 115.0 L323.5 140.0 L313.7 165.0 L303.4 190.0 L298.6 215.0 L292.1 240.0 L288.8 265.0 L284.9 290.0 L280.3 315.0"/>
<path d="M359.4 40.0 L356.1 65.0 L350.2 90.0 L342.2 115.0 L332.1 140.0 L324.9 165.0 L317.8 190.0 L313.1 215.0 L311.1 240.0 L306.4 265.0 L301.2 290.0 L291.5 315.0"/>
<path d="M375.2 40.0 L371.9 65.0 L361.4 90.0 L353.3 115.0 L344.1 140.0 L337.3 165.0 L333.0 190.0 L332.2 215.0 L325.5 240.0 L319.9 265.0 L311.8 290.0 L300.1 315.0"/>
<path d="M390.0 40.0 L382.9 65.0 L373.0 90.0 L364.9 115.0 L359.5 140.0 L354.1 165.0 L351.5 190.0 L346.7 215.0 L338.3 240.0 L331.3 265.0 L322.0 290.0 L315.1 315.0"/>
<path d="M400.8 40.0 L393.7 65.0 L385.3 90.0 L379.1 115.0 L376.6 140.0 L372.6 165.0 L366.6 190.0 L358.2 215.0 L349.1 240.0 L339.7 265.0 L334.4 290.0 L331.9 315.0"/>
<path d="M413.1 40.0 L405.8 65.0 L400.4 90.0 L396.0 115.0 L393.5 140.0 L387.4 165.0 L380.1 190.0 L369.7 215.0 L360.5 240.0 L355.8 265.0 L353.4 290.0 L348.1 315.0"/>
<path d="M426.2 40.0 L419.0 65.0 L416.8 90.0 L413.1 115.0 L408.4 140.0 L400.3 165.0 L390.1 190.0 L380.8 215.0 L377.1 240.0 L372.3 265.0 L368.8 290.0 L365.4 315.0"/>
<path d="M441.6 40.0 L438.9 65.0 L434.8 90.0 L429.1 115.0 L418.6 140.0 L410.2 165.0 L402.1 190.0 L397.7 215.0 L393.4 240.0 L390.8 265.0 L384.5 290.0 L375.3 315.0"/>
<path d="M458.2 40.0 L455.1 65.0 L446.3 90.0 L439.6 115.0 L428.0 140.0 L420.4 165.0 L416.1 190.0 L415.6 215.0 L410.2 240.0 L403.3 265.0 L394.2 290.0 L384.7 315.0"/>
<path d="M475.6 40.0 L467.9 65.0 L458.6 90.0 L449.7 115.0 L440.8 140.0 L438.3 165.0 L434.7 190.0 L432.0 215.0 L425.3 240.0 L416.5 265.0 L404.5 290.0 L399.4 315.0"/>
<path d="M488.5 40.0 L479.1 65.0 L467.7 90.0 L461.7 115.0 L457.6 140.0 L454.5 165.0 L452.5 190.0 L445.2 215.0 L435.4 240.0 L426.7 265.0 L418.9 290.0 L413.5 315.0"/>
<path d="M496.3 40.0 L487.7 65.0 L483.8 90.0 L478.7 115.0 L476.0 140.0 L471.5 165.0 L462.7 190.0 L454.0 215.0 L445.0 240.0 L439.6 265.0 L434.5 290.0 L431.4 315.0"/>
<path d="M510.5 40.0 L503.6 65.0 L501.4 90.0 L497.6 115.0 L490.6 140.0 L483.7 165.0 L474.2 190.0 L466.4 215.0 L458.9 240.0 L456.3 265.0 L452.8 290.0 L447.4 315.0"/>
<path d="M525.4 40.0 L520.0 65.0 L518.8 90.0 L511.1 115.0 L502.2 140.0 L493.2 165.0 L486.5 190.0 L481.3 215.0 L475.0 240.0 L473.4 265.0 L468.5 290.0 L461.7 315.0"/>
<path d="M541.0 40.0 L538.3 65.0 L531.7 90.0 L524.5 115.0 L513.2 140.0 L507.1 165.0 L499.8 190.0 L496.4 215.0 L494.6 240.0 L488.7 265.0 L479.4 290.0 L471.5 315.0"/>
<path d="M557.5 40.0 L553.0 65.0 L543.8 90.0 L534.6 115.0 L526.4 140.0 L520.7 165.0 L517.7 190.0 L514.3 215.0 L510.0 240.0 L499.1 265.0 L492.0 290.0 L481.0 315.0"/>
<path d="M571.2 40.0 L562.2 65.0 L554.8 90.0 L546.3 115.0 L541.4 140.0 L540.0 165.0 L534.3 190.0 L528.8 215.0 L520.2 240.0 L511.3 265.0 L503.3 290.0 L497.7 315.0"/>
<path d="M582.1 40.0 L572.9 65.0 L565.6 90.0 L563.5 115.0 L560.1 140.0 L556.3 165.0 L547.9 190.0 L539.6 215.0 L531.2 240.0 L523.0 265.0 L516.8 290.0 L514.8 315.0"/>
<path d="M594.6 40.0 L586.3 65.0 L582.3 90.0 L579.7 115.0 L576.6 140.0 L569.8 165.0 L558.5 190.0 L549.2 215.0 L542.3 240.0 L538.1 265.0 L535.8 290.0 L530.9 315.0"/>
<path d="M607.0 40.0 L603.1 65.0 L602.5 90.0 L596.9 115.0 L587.5 140.0 L580.6 165.0 L569.0 190.0 L563.1 215.0 L560.8 240.0 L557.3 265.0 L553.1 290.0 L545.4 315.0"/>
<path d="M623.9 40.0 L622.1 65.0 L615.3 90.0 L607.6 115.0 L598.6 140.0 L588.7 165.0 L583.6 190.0 L581.0 215.0 L577.8 240.0 L572.7 265.0 L565.9 290.0 L556.1 315.0"/>
<path d="M641.2 40.0 L636.9 65.0 L628.0 90.0 L619.4 115.0 L611.4 140.0 L604.2 165.0 L601.1 190.0 L598.6 215.0 L592.8 240.0 L584.5 265.0 L576.5 290.0 L568.0 315.0"/>
<path d="M657.5 40.0 L648.6 65.0 L639.5 90.0 L630.8 115.0 L625.4 140.0 L621.6 165.0 L618.0 190.0 L613.6 215.0 L603.9 240.0 L595.3 265.0 L587.7 290.0 L581.3 315.0"/>
<path d="M668.1 40.0 L657.5 65.0 L650.3 90.0 L645.4 115.0 L642.9 140.0 L638.8 165.0 L633.9 190.0 L626.2 215.0 L614.4 240.0 L607.4 265.0 L602.0 290.0 L597.4 315.0"/>
<path d="M678.0 40.0 L672.2 65.0 L664.9 90.0 L663.4 115.0 L658.6 140.0 L654.2 165.0 L646.0 190.0 L635.1 215.0 L625.8 240.0 L622.0 265.0 L618.7 290.0 L616.0 315.0"/>
<path d="M691.2 40.0 L687.4 65.0 L685.1 90.0 L680.1 115.0 L673.1 140.0 L665.7 165.0 L654.0 190.0 L647.8 215.0 L642.1 240.0 L640.2 265.0 L634.8 290.0 L631.5 315.0"/>
<path d="M707.3 40.0 L703.5 65.0 L699.8 90.0 L693.0 115.0 L682.6 140.0 L674.5 165.0 L667.3 190.0 L663.7 215.0 L659.7 240.0 L655.7 265.0 L649.3 290.0 L642.0 315.0"/>
<path d="M726.8 40.0 L720.8 65.0 L712.3 90.0 L704.7 115.0 L694.3 140.0 L687.0 165.0 L682.7 190.0 L681.8 215.0 L677.8 240.0 L670.5 265.0 L660.9 290.0 L651.7 315.0"/>
<path d="M740.2 40.0 L734.4 65.0 L723.0 90.0 L715.1 115.0 L709.3 140.0 L705.5 165.0 L701.6 190.0 L696.6 215.0 L690.1 240.0 L679.6 265.0 L672.4 290.0 L663.9 315.0"/>
<path d="M753.8 40.0 L742.5 65.0 L734.3 90.0 L728.1 115.0 L725.2 140.0 L721.4 165.0 L716.0 190.0 L710.5 215.0 L699.7 240.0 L690.6 265.0 L684.1 290.0 L680.6 315.0"/>
<path d="M762.7 40.0 L755.2 65.0 L749.9 90.0 L745.8 115.0 L744.3 140.0 L738.8 165.0 L728.3 190.0 L721.1 215.0 L712.6 240.0 L706.0 265.0 L700.4 290.0 L699.5 315.0"/>
<path d="M775.4 40.0 L768.6 65.0 L765.5 90.0 L764.9 115.0 L758.3 140.0 L748.7 165.0 L738.6 190.0 L730.3 215.0 L724.9 240.0 L723.1 265.0 L718.7 290.0 L713.2 315.0"/>
<path d="M791.9 40.0 L788.6 65.0 L783.1 90.0 L779.1 115.0 L769.5 140.0 L760.4 165.0 L752.0 190.0 L747.4 215.0 L743.9 240.0 L740.8 265.0 L733.5 290.0 L726.9 315.0"/>
<path d="M808.6 40.0 L805.3 65.0 L797.7 90.0 L790.0 115.0 L779.6 140.0 L771.0 165.0 L766.1 190.0 L762.8 215.0 L760.4 240.0 L753.2 265.0 L746.0 290.0 L735.4 315.0"/>
<path d="M824.9 40.0 L817.8 65.0 L808.7 90.0 L800.4 115.0 L790.6 140.0 L788.6 165.0 L784.5 190.0 L781.1 215.0 L775.1 240.0 L766.8 265.0 L755.9 290.0 L748.0 315.0"/>
<path d="M839.1 40.0 L827.0 65.0 L819.6 90.0 L812.8 115.0 L806.9 140.0 L805.7 165.0 L801.9 190.0 L795.9 215.0 L785.0 240.0 L777.5 265.0 L768.5 290.0 L763.7 315.0"/>
<path d="M849.2 40.0 L837.8 65.0 L833.5 90.0 L829.4 115.0 L825.6 140.0 L822.8 165.0 L814.1 190.0 L805.1 215.0 L796.0 240.0 L789.6 265.0 L783.5 290.0 L781.3 315.0"/>
<path d="M859.0 40.0 L853.5 65.0 L850.8 90.0 L846.2 115.0 L843.0 140.0 L834.1 165.0 L824.9 190.0 L815.2 215.0 L809.2 240.0 L806.6 265.0 L802.7 290.0 L799.0 315.0"/>
<path d="M873.4 40.0 L870.1 65.0 L866.9 90.0 L862.5 115.0 L854.6 140.0 L845.5 165.0 L834.5 190.0 L830.3 215.0 L827.1 240.0 L823.1 265.0 L817.1 290.0 L810.6 315.0"/>
<path d="M890.0 40.0 L887.1 65.0 L883.6 90.0 L874.3 115.0 L864.8 140.0 L856.8 165.0 L851.4 190.0 L847.0 215.0 L844.0 240.0 L839.1 265.0 L831.6 290.0 L821.9 315.0"/>
</g>
<g clip-path="url(#cc)" fill="none" stroke="#ababab" stroke-width="0.6">
<path d="M190.0 -100.0 L210.0 -102.7 L230.0 -106.3 L250.0 -110.6 L270.0 -115.2 L290.0 -119.9 L310.0 -124.4 L330.0 -128.2 L350.0 -131.2 L370.0 -133.3 L390.0 -134.5 L410.0 -135.1 L430.0 -135.2 L450.0 -135.3 L470.0 -135.7 L490.0 -136.6 L510.0 -138.4 L530.0 -141.1 L550.0 -144.7 L570.0 -148.9 L590.0 -153.6 L610.0 -158.3"/>
<path d="M190.0 -79.4 L210.0 -84.1 L230.0 -88.3 L250.0 -91.9 L270.0 -94.6 L290.0 -96.4 L310.0 -97.4 L330.0 -97.7 L350.0 -97.8 L370.0 -98.0 L390.0 -98.5 L410.0 -99.7 L430.0 -101.8 L450.0 -104.8 L470.0 -108.6 L490.0 -113.0 L510.0 -117.8 L530.0 -122.4 L550.0 -126.7 L570.0 -130.3 L590.0 -133.0 L610.0 -134.8"/>
<path d="M190.0 -57.9 L210.0 -59.4 L230.0 -60.1 L250.0 -60.4 L270.0 -60.4 L290.0 -60.7 L310.0 -61.4 L330.0 -62.9 L350.0 -65.3 L370.0 -68.6 L390.0 -72.6 L410.0 -77.2 L430.0 -81.9 L450.0 -86.5 L470.0 -90.6 L490.0 -93.9 L510.0 -96.3 L530.0 -97.8 L550.0 -98.6 L570.0 -98.8 L590.0 -98.9 L610.0 -99.1"/>
<path d="M190.0 -23.1 L210.0 -23.5 L230.0 -24.4 L250.0 -26.2 L270.0 -28.9 L290.0 -32.5 L310.0 -36.7 L330.0 -41.4 L350.0 -46.1 L370.0 -50.5 L390.0 -54.4 L410.0 -57.4 L430.0 -59.5 L450.0 -60.7 L470.0 -61.3 L490.0 -61.5 L510.0 -61.5 L530.0 -61.9 L550.0 -62.8 L570.0 -64.6 L590.0 -67.3 L610.0 -70.8"/>
<path d="M190.0 7.4 L210.0 3.6 L230.0 -0.8 L250.0 -5.6 L270.0 -10.2 L290.0 -14.5 L310.0 -18.1 L330.0 -20.8 L350.0 -22.6 L370.0 -23.6 L390.0 -24.0 L410.0 -24.1 L430.0 -24.2 L450.0 -24.7 L470.0 -25.9 L490.0 -28.0 L510.0 -31.0 L530.0 -34.8 L550.0 -39.2 L570.0 -43.9 L590.0 -48.6 L610.0 -52.9"/>
<path d="M190.0 25.7 L210.0 21.6 L230.0 18.3 L250.0 15.9 L270.0 14.4 L290.0 13.6 L310.0 13.4 L330.0 13.3 L350.0 13.1 L370.0 12.4 L390.0 10.9 L410.0 8.5 L430.0 5.2 L450.0 1.2 L470.0 -3.4 L490.0 -8.1 L510.0 -12.7 L530.0 -16.7 L550.0 -20.1 L570.0 -22.5 L590.0 -24.0 L610.0 -24.8"/>
<path d="M190.0 51.5 L210.0 50.9 L230.0 50.8 L250.0 50.7 L270.0 50.3 L290.0 49.4 L310.0 47.6 L330.0 44.9 L350.0 41.4 L370.0 37.1 L390.0 32.5 L410.0 27.7 L430.0 23.3 L450.0 19.5 L470.0 16.4 L490.0 14.3 L510.0 13.0 L530.0 12.5 L550.0 12.3 L570.0 12.2 L590.0 11.9 L610.0 10.9"/>
<path d="M190.0 87.5 L210.0 86.3 L230.0 84.2 L250.0 81.2 L270.0 77.4 L290.0 73.0 L310.0 68.3 L330.0 63.6 L350.0 59.3 L370.0 55.7 L390.0 53.0 L410.0 51.2 L430.0 50.2 L450.0 49.8 L470.0 49.7 L490.0 49.6 L510.0 49.0 L530.0 47.8 L550.0 45.8 L570.0 42.8 L590.0 39.0 L610.0 34.6"/>
<path d="M190.0 113.4 L210.0 108.8 L230.0 104.1 L250.0 99.5 L270.0 95.5 L290.0 92.1 L310.0 89.7 L330.0 88.2 L350.0 87.4 L370.0 87.1 L390.0 87.1 L410.0 86.9 L430.0 86.1 L450.0 84.7 L470.0 82.3 L490.0 79.0 L510.0 75.0 L530.0 70.5 L550.0 65.7 L570.0 61.2 L590.0 57.1 L610.0 53.7"/>
<path d="M190.0 131.7 L210.0 128.6 L230.0 126.5 L250.0 125.2 L270.0 124.7 L290.0 124.5 L310.0 124.4 L330.0 124.1 L350.0 123.1 L370.0 121.4 L390.0 118.7 L410.0 115.2 L430.0 111.0 L450.0 106.3 L470.0 101.6 L490.0 97.1 L510.0 93.3 L530.0 90.2 L550.0 88.1 L570.0 86.8 L590.0 86.2 L610.0 86.1"/>
<path d="M190.0 162.0 L210.0 161.9 L230.0 161.8 L250.0 161.3 L270.0 160.1 L290.0 158.0 L310.0 155.0 L330.0 151.2 L350.0 146.8 L370.0 142.1 L390.0 137.4 L410.0 133.2 L430.0 129.6 L450.0 126.8 L470.0 125.0 L490.0 123.9 L510.0 123.5 L530.0 123.5 L550.0 123.3 L570.0 122.8 L590.0 121.6 L610.0 119.6"/>
<path d="M190.0 196.9 L210.0 194.5 L230.0 191.2 L250.0 187.2 L270.0 182.7 L290.0 177.9 L310.0 173.4 L330.0 169.3 L350.0 165.9 L370.0 163.5 L390.0 161.9 L410.0 161.2 L430.0 160.9 L450.0 160.8 L470.0 160.6 L490.0 159.9 L510.0 158.5 L530.0 156.1 L550.0 152.9 L570.0 148.9 L590.0 144.3 L610.0 139.6"/>
<path d="M190.0 218.5 L210.0 213.8 L230.0 209.3 L250.0 205.5 L270.0 202.4 L290.0 200.3 L310.0 199.0 L330.0 198.4 L350.0 198.3 L370.0 198.2 L390.0 197.9 L410.0 196.9 L430.0 195.2 L450.0 192.5 L470.0 189.0 L490.0 184.8 L510.0 180.1 L530.0 175.4 L550.0 171.0 L570.0 167.1 L590.0 164.0 L610.0 161.9"/>
<path d="M190.0 239.0 L210.0 237.2 L230.0 236.2 L250.0 235.8 L270.0 235.7 L290.0 235.5 L310.0 235.0 L330.0 233.8 L350.0 231.8 L370.0 228.8 L390.0 225.1 L410.0 220.7 L430.0 216.0 L450.0 211.3 L470.0 207.0 L490.0 203.4 L510.0 200.6 L530.0 198.7 L550.0 197.7 L570.0 197.3 L590.0 197.2 L610.0 197.1"/>
<path d="M190.0 273.1 L210.0 272.8 L230.0 272.1 L250.0 270.7 L270.0 268.3 L290.0 265.1 L310.0 261.1 L330.0 256.5 L350.0 251.8 L370.0 247.2 L390.0 243.1 L410.0 239.7 L430.0 237.3 L450.0 235.7 L470.0 234.9 L490.0 234.7 L510.0 234.6 L530.0 234.4 L550.0 233.7 L570.0 232.2 L590.0 229.9 L610.0 226.7"/>
<path d="M190.0 304.7 L210.0 301.2 L230.0 297.0 L250.0 292.3 L270.0 287.6 L290.0 283.2 L310.0 279.3 L330.0 276.2 L350.0 274.1 L370.0 272.8 L390.0 272.2 L410.0 272.0 L430.0 272.0 L450.0 271.6 L470.0 270.7 L490.0 269.0 L510.0 266.3 L530.0 262.8 L550.0 258.6 L570.0 254.0 L590.0 249.3 L610.0 244.8"/>
<path d="M190.0 323.5 L210.0 319.2 L230.0 315.6 L250.0 312.8 L270.0 311.0 L290.0 309.9 L310.0 309.5 L330.0 309.4 L350.0 309.3 L370.0 308.8 L390.0 307.6 L410.0 305.6 L430.0 302.7 L450.0 298.9 L470.0 294.5 L490.0 289.8 L510.0 285.1 L530.0 280.8 L550.0 277.2 L570.0 274.4 L590.0 272.5 L610.0 271.5"/>
<path d="M190.0 347.9 L210.0 347.1 L230.0 346.9 L250.0 346.8 L270.0 346.6 L290.0 345.9 L310.0 344.4 L330.0 342.1 L350.0 338.9 L370.0 334.9 L390.0 330.4 L410.0 325.6 L430.0 321.0 L450.0 316.9 L470.0 313.6 L490.0 311.1 L510.0 309.5 L530.0 308.7 L550.0 308.4 L570.0 308.4 L590.0 308.1 L610.0 307.5"/>
<path d="M190.0 383.8 L210.0 382.9 L230.0 381.2 L250.0 378.5 L270.0 375.0 L290.0 370.8 L310.0 366.2 L330.0 361.4 L350.0 357.0 L370.0 353.1 L390.0 350.0 L410.0 347.9 L430.0 346.6 L450.0 346.0 L470.0 345.8 L490.0 345.7 L510.0 345.4 L530.0 344.5 L550.0 342.8 L570.0 340.1 L590.0 336.7 L610.0 332.5"/>
<path d="M190.0 411.1 L210.0 406.7 L230.0 402.0 L250.0 397.3 L270.0 393.0 L290.0 389.4 L310.0 386.6 L330.0 384.7 L350.0 383.7 L370.0 383.3 L390.0 383.2 L410.0 383.1 L430.0 382.6 L450.0 381.4 L470.0 379.4 L490.0 376.5 L510.0 372.7 L530.0 368.3 L550.0 363.6 L570.0 359.0 L590.0 354.6 L610.0 351.0"/>
<path d="M190.0 429.1 L210.0 425.8 L230.0 423.3 L250.0 421.7 L270.0 420.9 L290.0 420.6 L310.0 420.6 L330.0 420.4 L350.0 419.7 L370.0 418.2 L390.0 415.9 L410.0 412.7 L430.0 408.7 L450.0 404.2 L470.0 399.5 L490.0 394.9 L510.0 390.7 L530.0 387.4 L550.0 384.9 L570.0 383.3 L590.0 382.5 L610.0 382.2"/>
<path d="M190.0 458.2 L210.0 458.0 L230.0 457.9 L250.0 457.6 L270.0 456.7 L290.0 455.0 L310.0 452.3 L330.0 448.9 L350.0 444.6 L370.0 440.0 L390.0 435.3 L410.0 430.8 L430.0 426.9 L450.0 423.8 L470.0 421.6 L490.0 420.3 L510.0 419.7 L530.0 419.6 L550.0 419.5 L570.0 419.2 L590.0 418.3 L610.0 416.6"/>
<path d="M190.0 493.6 L210.0 491.6 L230.0 488.7 L250.0 484.9 L270.0 480.5 L290.0 475.8 L310.0 471.1 L330.0 466.8 L350.0 463.2 L370.0 460.4 L390.0 458.5 L410.0 457.5 L430.0 457.0 L450.0 456.9 L470.0 456.8 L490.0 456.3 L510.0 455.2 L530.0 453.2 L550.0 450.3 L570.0 446.6 L590.0 442.2 L610.0 437.5"/>
<path d="M190.0 516.4 L210.0 511.6 L230.0 507.1 L250.0 502.9 L270.0 499.6 L290.0 497.1 L310.0 495.5 L330.0 494.7 L350.0 494.4 L370.0 494.3 L390.0 494.1 L410.0 493.4 L430.0 492.0 L450.0 489.7 L470.0 486.5 L490.0 482.5 L510.0 478.0 L530.0 473.3 L550.0 468.7 L570.0 464.6 L590.0 461.2 L610.0 458.7"/>
<path d="M190.0 536.0 L210.0 533.8 L230.0 532.5 L250.0 531.9 L270.0 531.8 L290.0 531.7 L310.0 531.4 L330.0 530.5 L350.0 528.8 L370.0 526.2 L390.0 522.7 L410.0 518.5 L430.0 513.9 L450.0 509.1 L470.0 504.7 L490.0 500.7 L510.0 497.6 L530.0 495.4 L550.0 494.1 L570.0 493.5 L590.0 493.3 L610.0 493.2"/>
<path d="M44.7 40.0 L48.1 60.0 L52.4 80.0 L58.0 100.0 L65.0 120.0 L73.2 140.0 L82.0 160.0 L90.8 180.0 L99.0 200.0 L106.0 220.0 L111.6 240.0 L115.9 260.0 L119.3 280.0 L122.4 300.0 L125.9 320.0"/>
<path d="M69.0 40.0 L75.6 60.0 L83.4 80.0 L92.0 100.0 L100.9 120.0 L109.4 140.0 L116.8 160.0 L122.9 180.0 L127.6 200.0 L131.2 220.0 L134.3 240.0 L137.6 260.0 L141.7 280.0 L147.0 300.0 L153.7 320.0"/>
<path d="M102.1 40.0 L111.0 60.0 L119.6 80.0 L127.4 100.0 L134.0 120.0 L139.1 140.0 L143.1 160.0 L146.3 180.0 L149.5 200.0 L153.2 220.0 L158.1 240.0 L164.3 260.0 L171.9 280.0 L180.4 300.0 L189.3 320.0"/>
<path d="M138.0 40.0 L145.0 60.0 L150.6 80.0 L154.9 100.0 L158.3 120.0 L161.4 140.0 L164.9 160.0 L169.3 180.0 L175.1 200.0 L182.2 220.0 L190.5 240.0 L199.3 260.0 L208.1 280.0 L216.2 300.0 L223.0 320.0"/>
<path d="M166.6 40.0 L170.2 60.0 L173.3 80.0 L176.6 100.0 L180.7 120.0 L186.0 140.0 L192.7 160.0 L200.6 180.0 L209.4 200.0 L218.2 220.0 L226.6 240.0 L233.9 260.0 L239.8 280.0 L244.3 300.0 L247.9 320.0"/>
<path d="M188.5 40.0 L192.2 60.0 L197.1 80.0 L203.3 100.0 L210.9 120.0 L219.4 140.0 L228.3 160.0 L236.9 180.0 L244.6 200.0 L251.0 220.0 L256.0 240.0 L259.8 260.0 L263.0 280.0 L266.2 300.0 L270.0 320.0"/>
<path d="M214.1 40.0 L221.2 60.0 L229.5 80.0 L238.3 100.0 L247.1 120.0 L255.1 140.0 L262.0 160.0 L267.4 180.0 L271.6 200.0 L274.9 220.0 L278.1 240.0 L281.6 260.0 L286.2 280.0 L292.1 300.0 L299.4 320.0"/>
<path d="M248.4 40.0 L257.2 60.0 L265.6 80.0 L272.9 100.0 L278.8 120.0 L283.3 140.0 L286.9 160.0 L290.0 180.0 L293.4 200.0 L297.5 220.0 L303.0 240.0 L309.9 260.0 L317.9 280.0 L326.7 300.0 L335.5 320.0"/>
<path d="M283.6 40.0 L290.0 60.0 L295.0 80.0 L298.8 100.0 L302.0 120.0 L305.2 140.0 L309.0 160.0 L314.0 180.0 L320.4 200.0 L328.1 220.0 L336.7 240.0 L345.6 260.0 L354.1 280.0 L361.7 300.0 L367.9 320.0"/>
<path d="M310.6 40.0 L314.0 60.0 L317.1 80.0 L320.6 100.0 L325.2 120.0 L331.1 140.0 L338.4 160.0 L346.8 180.0 L355.7 200.0 L364.4 220.0 L372.3 240.0 L379.0 260.0 L384.3 280.0 L388.3 300.0 L391.6 320.0"/>
<path d="M332.4 40.0 L336.6 60.0 L342.0 80.0 L348.9 100.0 L356.9 120.0 L365.7 140.0 L374.5 160.0 L382.8 180.0 L389.9 200.0 L395.7 220.0 L400.1 240.0 L403.6 260.0 L406.7 280.0 L410.1 300.0 L414.4 320.0"/>
<path d="M359.4 40.0 L367.1 60.0 L375.7 80.0 L384.6 100.0 L393.1 120.0 L400.7 140.0 L406.9 160.0 L411.8 180.0 L415.5 200.0 L418.7 220.0 L421.9 240.0 L425.8 260.0 L431.0 280.0 L437.6 300.0 L445.4 320.0"/>
<path d="M394.7 40.0 L403.4 60.0 L411.3 80.0 L418.0 100.0 L423.3 120.0 L427.4 140.0 L430.6 160.0 L433.8 180.0 L437.4 200.0 L442.1 220.0 L448.2 240.0 L455.7 260.0 L464.1 280.0 L473.0 300.0 L481.7 320.0"/>
<path d="M428.9 40.0 L434.7 60.0 L439.1 80.0 L442.6 100.0 L445.7 120.0 L449.1 140.0 L453.4 160.0 L459.0 180.0 L466.0 200.0 L474.2 220.0 L483.0 240.0 L491.8 260.0 L500.0 280.0 L507.0 300.0 L512.6 320.0"/>
<path d="M454.5 40.0 L457.7 60.0 L460.9 80.0 L464.9 100.0 L470.0 120.0 L476.6 140.0 L484.4 160.0 L493.0 180.0 L501.9 200.0 L510.4 220.0 L517.8 240.0 L523.9 260.0 L528.6 280.0 L532.2 300.0 L535.3 320.0"/>
<path d="M476.4 40.0 L481.1 60.0 L487.2 80.0 L494.7 100.0 L503.1 120.0 L512.0 140.0 L520.6 160.0 L528.5 180.0 L535.0 200.0 L540.1 220.0 L544.1 240.0 L547.3 260.0 L550.5 280.0 L554.2 300.0 L559.1 320.0"/>
<path d="M505.0 40.0 L513.2 60.0 L522.0 80.0 L530.8 100.0 L539.0 120.0 L546.0 140.0 L551.6 160.0 L555.9 180.0 L559.3 200.0 L562.4 220.0 L565.9 240.0 L570.3 260.0 L576.1 280.0 L583.2 300.0 L591.5 320.0"/>
<path d="M540.9 40.0 L549.4 60.0 L556.8 80.0 L562.9 100.0 L567.6 120.0 L571.2 140.0 L574.3 160.0 L577.6 180.0 L581.7 200.0 L587.0 220.0 L593.7 240.0 L601.7 260.0 L610.4 280.0 L619.2 300.0 L627.6 320.0"/>
<path d="M574.0 40.0 L579.1 60.0 L583.1 80.0 L586.3 100.0 L589.5 120.0 L593.2 140.0 L598.1 160.0 L604.3 180.0 L611.9 200.0 L620.4 220.0 L629.3 240.0 L637.9 260.0 L645.6 280.0 L652.0 300.0 L656.9 320.0"/>
<path d="M598.3 40.0 L601.4 60.0 L604.9 80.0 L609.3 100.0 L615.1 120.0 L622.2 140.0 L630.5 160.0 L639.3 180.0 L648.1 200.0 L656.2 220.0 L663.0 240.0 L668.4 260.0 L672.6 280.0 L675.9 300.0 L679.1 320.0"/>
<path d="M620.7 40.0 L626.0 60.0 L632.7 80.0 L640.6 100.0 L649.4 120.0 L658.2 140.0 L666.6 160.0 L673.9 180.0 L679.8 200.0 L684.3 220.0 L687.9 240.0 L691.0 260.0 L694.3 280.0 L698.5 300.0 L704.0 320.0"/>
<path d="M650.9 40.0 L659.4 60.0 L668.3 80.0 L676.9 100.0 L684.6 120.0 L691.0 140.0 L696.0 160.0 L699.8 180.0 L703.0 200.0 L706.2 220.0 L710.0 240.0 L715.0 260.0 L721.4 280.0 L729.1 300.0 L737.7 320.0"/>
<path d="M687.1 40.0 L695.1 60.0 L702.0 80.0 L707.4 100.0 L711.6 120.0 L715.0 140.0 L718.1 160.0 L721.6 180.0 L726.2 200.0 L732.1 220.0 L739.4 240.0 L747.8 260.0 L756.7 280.0 L765.4 300.0 L773.3 320.0"/>
<path d="M718.8 40.0 L723.3 60.0 L726.9 80.0 L730.0 100.0 L733.4 120.0 L737.5 140.0 L743.0 160.0 L749.9 180.0 L757.9 200.0 L766.7 220.0 L775.5 240.0 L783.8 260.0 L790.9 280.0 L796.7 300.0 L801.1 320.0"/>
<path d="M742.0 40.0 L745.2 60.0 L749.0 80.0 L754.0 100.0 L760.4 120.0 L768.1 140.0 L776.7 160.0 L785.6 180.0 L794.1 200.0 L801.7 220.0 L807.9 240.0 L812.8 260.0 L816.5 280.0 L819.6 300.0 L822.9 320.0"/>
<path d="M765.2 40.0 L771.1 60.0 L778.4 80.0 L786.8 100.0 L795.7 120.0 L804.4 140.0 L812.3 160.0 L819.0 180.0 L824.3 200.0 L828.3 220.0 L831.6 240.0 L834.8 260.0 L838.4 280.0 L843.1 300.0 L849.2 320.0"/>
<path d="M796.9 40.0 L805.7 60.0 L814.5 80.0 L822.8 100.0 L829.9 120.0 L835.7 140.0 L840.1 160.0 L843.6 180.0 L846.7 200.0 L850.1 220.0 L854.4 240.0 L860.0 260.0 L867.1 280.0 L875.2 300.0 L884.0 320.0"/>
<path d="M833.1 40.0 L840.7 60.0 L846.9 80.0 L851.8 100.0 L855.5 120.0 L858.7 140.0 L861.9 160.0 L865.8 180.0 L871.0 200.0 L877.6 220.0 L885.4 240.0 L894.1 260.0 L902.9 280.0 L911.4 300.0 L918.8 320.0"/>
</g>
<path d="M200.0 286.0 L216.0 302.0 L251.0 314.0 L251.0 330.0 L200.0 330.0 Z" fill="#eff0dc" />
<path d="M192.0 222.0 L235.0 218.0 L240.0 240.0 L233.0 258.0 L205.0 262.0 L196.0 245.0 Z" fill="#eeeedd" />
<path d="M235.0 190.0 L276.0 190.0 L276.0 230.0 L251.0 230.0 L235.0 216.0 Z" fill="#dcefc6" />
<path d="M200.0 181.0 L227.0 181.0 L231.0 204.0 L200.0 204.0 Z" fill="#d6efcc" />
<path d="M341.0 198.0 L357.0 198.0 L357.0 234.0 L341.0 234.0 Z" fill="#e3dbe3" />
<path d="M420.0 247.0 L439.0 247.0 L447.0 283.0 L429.0 302.0 L416.0 283.0 Z" fill="#cdeccb" />
<path d="M465.0 57.0 L494.0 59.0 L498.0 82.0 L471.0 86.0 Z" fill="#d3f2d0" />
<path d="M294.0 58.0 L330.0 55.0 L359.0 80.0 L362.0 100.0 L372.0 125.0 L385.0 140.0 L372.0 148.0 L350.0 118.0 L330.0 100.0 L300.0 85.0 Z" fill="#d5efcf" />
<path d="M290.0 40.0 L320.0 35.0 L335.0 60.0 L322.0 88.0 L300.0 80.0 Z" fill="#e3ecd2" />
<path d="M459.0 118.0 L488.0 118.0 L488.0 149.0 L459.0 149.0 Z" fill="#d9eec8" />
<path d="M245.0 98.0 L265.0 98.0 L265.0 118.0 L245.0 118.0 Z" fill="#d6efcc" />
<path d="M274.0 110.0 L294.0 110.0 L294.0 137.0 L274.0 137.0 Z" fill="#d6efcc" />
<path d="M200.0 110.0 L216.0 110.0 L216.0 137.0 L200.0 137.0 Z" fill="#d6efcc" />
<path d="M300.0 150.0 L330.0 140.0 L345.0 165.0 L320.0 175.0 Z" fill="#d6efcc" />
<path d="M380.0 150.0 L395.0 140.0 L410.0 175.0 L392.0 180.0 Z" fill="#d6efcc" />
<path d="M520.0 200.0 L540.0 195.0 L545.0 230.0 L525.0 240.0 Z" fill="#d8ecd0" />
<path d="M524.0 106.0 L562.0 106.0 L565.0 161.0 L524.0 161.0 Z" fill="#d3e3c4" />
<path d="M532.0 161.0 L582.0 161.0 L590.0 208.0 L532.0 208.0 Z" fill="#d6e5c8" />
<path d="M459.0 290.0 L482.0 283.0 L498.0 287.0 L494.0 306.0 L474.0 320.0 L455.0 314.0 Z" fill="#aad3df" />
<path d="M557.0 306.0 L572.0 306.0 L572.0 318.0 L557.0 318.0 Z" fill="#aad3df" />
<rect x="465.6" y="109.5" width="7.0" height="4.8" fill="#e8e6e0" clip-path="url(#cc)"/>
<rect x="239.5" y="100.8" width="3.2" height="6.1" fill="#d5efd0" clip-path="url(#cc)"/>
<rect x="343.9" y="280.3" width="7.7" height="5.2" fill="#dcecc8" clip-path="url(#cc)"/>
<rect x="536.4" y="101.7" width="3.2" height="3.1" fill="#d5efd0" clip-path="url(#cc)"/>
<rect x="394.1" y="196.2" width="7.9" height="6.1" fill="#d1ecd0" clip-path="url(#cc)"/>
<rect x="424.4" y="307.2" width="5.7" height="3.1" fill="#d1ecd0" clip-path="url(#cc)"/>
<rect x="431.6" y="328.1" width="7.0" height="3.6" fill="#d1ecd0" clip-path="url(#cc)"/>
<rect x="414.0" y="73.2" width="5.8" height="6.6" fill="#d5efd0" clip-path="url(#cc)"/>
<rect x="366.5" y="52.6" width="7.0" height="6.9" fill="#d5efd0" clip-path="url(#cc)"/>
<rect x="285.1" y="84.0" width="5.8" height="4.1" fill="#e8e6e0" clip-path="url(#cc)"/>
<rect x="375.8" y="258.4" width="8.5" height="4.5" fill="#e8e6e0" clip-path="url(#cc)"/>
<rect x="484.6" y="73.6" width="6.8" height="5.8" fill="#d1ecd0" clip-path="url(#cc)"/>
<rect x="461.1" y="299.2" width="8.5" height="3.2" fill="#d5efd0" clip-path="url(#cc)"/>
<rect x="204.4" y="54.1" width="6.9" height="6.3" fill="#d5efd0" clip-path="url(#cc)"/>
<rect x="351.7" y="137.5" width="6.6" height="6.8" fill="#d1ecd0" clip-path="url(#cc)"/>
<rect x="437.5" y="138.6" width="8.7" height="5.9" fill="#d1ecd0" clip-path="url(#cc)"/>
<rect x="464.0" y="90.6" width="7.8" height="4.5" fill="#e8e6e0" clip-path="url(#cc)"/>
<rect x="445.6" y="167.0" width="5.3" height="6.1" fill="#dcecc8" clip-path="url(#cc)"/>
<rect x="506.0" y="208.7" width="4.8" height="3.2" fill="#dcecc8" clip-path="url(#cc)"/>
<rect x="539.1" y="253.2" width="3.1" height="3.6" fill="#dcecc8" clip-path="url(#cc)"/>
<rect x="428.0" y="323.4" width="4.5" height="4.5" fill="#d1ecd0" clip-path="url(#cc)"/>
<rect x="434.7" y="300.9" width="7.8" height="4.1" fill="#d5efd0" clip-path="url(#cc)"/>
<rect x="325.4" y="125.0" width="3.9" height="6.7" fill="#d5efd0" clip-path="url(#cc)"/>
<rect x="312.5" y="89.4" width="8.3" height="7.0" fill="#e8e6e0" clip-path="url(#cc)"/>
<rect x="306.8" y="288.3" width="7.8" height="5.7" fill="#d1ecd0" clip-path="url(#cc)"/>
<rect x="335.3" y="73.8" width="6.3" height="6.2" fill="#e8e6e0" clip-path="url(#cc)"/>
<rect x="507.2" y="252.2" width="8.9" height="4.2" fill="#d5efd0" clip-path="url(#cc)"/>
<rect x="464.3" y="180.3" width="4.2" height="4.0" fill="#d5efd0" clip-path="url(#cc)"/>
<rect x="508.7" y="178.7" width="3.5" height="6.2" fill="#d5efd0" clip-path="url(#cc)"/>
<rect x="290.8" y="212.3" width="8.4" height="6.5" fill="#dcecc8" clip-path="url(#cc)"/>
<rect x="385.9" y="215.0" width="4.1" height="3.8" fill="#e8e6e0" clip-path="url(#cc)"/>
<rect x="514.3" y="131.1" width="6.5" height="4.4" fill="#e8e6e0" clip-path="url(#cc)"/>
<rect x="296.1" y="308.3" width="6.0" height="6.5" fill="#dcecc8" clip-path="url(#cc)"/>
<rect x="446.8" y="270.5" width="3.9" height="5.4" fill="#dcecc8" clip-path="url(#cc)"/>
<rect x="309.4" y="220.0" width="3.6" height="3.8" fill="#d1ecd0" clip-path="url(#cc)"/>
<rect x="428.8" y="109.8" width="8.6" height="4.1" fill="#d5efd0" clip-path="url(#cc)"/>
<rect x="569.1" y="264.8" width="7.9" height="6.9" fill="#dcecc8" clip-path="url(#cc)"/>
<rect x="529.1" y="144.9" width="9.0" height="4.5" fill="#d5efd0" clip-path="url(#cc)"/>
<rect x="219.9" y="206.1" width="8.2" height="4.8" fill="#d5efd0" clip-path="url(#cc)"/>
<rect x="536.6" y="229.2" width="8.5" height="5.8" fill="#d5efd0" clip-path="url(#cc)"/>
<rect x="300.3" y="208.1" width="6.8" height="6.8" fill="#d1ecd0" clip-path="url(#cc)"/>
<rect x="271.2" y="287.9" width="5.2" height="3.9" fill="#e8e6e0" clip-path="url(#cc)"/>
<rect x="267.1" y="313.7" width="8.6" height="3.2" fill="#d5efd0" clip-path="url(#cc)"/>
<rect x="526.5" y="63.2" width="7.7" height="5.8" fill="#d1ecd0" clip-path="url(#cc)"/>
<rect x="221.7" y="90.5" width="7.5" height="6.8" fill="#dcecc8" clip-path="url(#cc)"/>
<rect x="430.0" y="173.6" width="6.9" height="4.9" fill="#dcecc8" clip-path="url(#cc)"/>
<rect x="300.2" y="84.8" width="5.9" height="3.7" fill="#e8e6e0" clip-path="url(#cc)"/>
<rect x="514.9" y="306.0" width="8.4" height="4.9" fill="#e8e6e0" clip-path="url(#cc)"/>
<rect x="511.6" y="93.9" width="8.0" height="3.3" fill="#dcecc8" clip-path="url(#cc)"/>
<rect x="546.6" y="89.1" width="5.7" height="3.4" fill="#d1ecd0" clip-path="url(#cc)"/>
<rect x="528.5" y="225.9" width="5.7" height="4.4" fill="#e8e6e0" clip-path="url(#cc)"/>
<rect x="386.2" y="225.9" width="3.9" height="3.9" fill="#d5efd0" clip-path="url(#cc)"/>
<rect x="270.3" y="176.4" width="8.3" height="4.8" fill="#e8e6e0" clip-path="url(#cc)"/>
<rect x="303.9" y="165.3" width="3.9" height="4.1" fill="#dcecc8" clip-path="url(#cc)"/>
<rect x="330.5" y="97.0" width="5.9" height="4.3" fill="#d1ecd0" clip-path="url(#cc)"/>
<rect x="244.5" y="324.0" width="3.3" height="6.6" fill="#e8e6e0" clip-path="url(#cc)"/>
<rect x="418.4" y="283.9" width="3.7" height="6.0" fill="#dcecc8" clip-path="url(#cc)"/>
<rect x="368.5" y="123.2" width="4.4" height="4.0" fill="#d1ecd0" clip-path="url(#cc)"/>
<rect x="312.9" y="300.9" width="3.3" height="5.9" fill="#dcecc8" clip-path="url(#cc)"/>
<rect x="256.3" y="229.1" width="5.7" height="5.0" fill="#e8e6e0" clip-path="url(#cc)"/>
<rect x="372.8" y="271.1" width="8.7" height="4.1" fill="#dcecc8" clip-path="url(#cc)"/>
<rect x="369.7" y="305.4" width="4.3" height="5.3" fill="#e8e6e0" clip-path="url(#cc)"/>
<rect x="528.9" y="196.1" width="4.4" height="3.7" fill="#d5efd0" clip-path="url(#cc)"/>
<rect x="523.3" y="299.0" width="7.4" height="6.0" fill="#e8e6e0" clip-path="url(#cc)"/>
<rect x="280.4" y="221.5" width="7.2" height="6.2" fill="#dcecc8" clip-path="url(#cc)"/>
<rect x="278.9" y="68.4" width="7.4" height="4.6" fill="#d5efd0" clip-path="url(#cc)"/>
<rect x="402.2" y="147.3" width="4.7" height="5.6" fill="#d1ecd0" clip-path="url(#cc)"/>
<rect x="235.2" y="164.7" width="7.6" height="3.5" fill="#dcecc8" clip-path="url(#cc)"/>
<rect x="296.9" y="207.7" width="8.9" height="3.1" fill="#dcecc8" clip-path="url(#cc)"/>
<rect x="424.2" y="290.3" width="5.1" height="6.7" fill="#d5efd0" clip-path="url(#cc)"/>
<path d="M0.0 100.0 L40.0 108.0 L60.0 115.0" fill="none" stroke="#aaaaaa" stroke-width="0.8" stroke-linecap="round" stroke-linejoin="round" />
<path d="M0.0 290.0 L30.0 310.0 L55.0 330.0" fill="none" stroke="#aaaaaa" stroke-width="0.8" stroke-linecap="round" stroke-linejoin="round" />
<path d="M60.0 220.0 L110.0 215.0 L135.0 210.0" fill="none" stroke="#aaaaaa" stroke-width="0.8" stroke-linecap="round" stroke-linejoin="round" />
<path d="M70.0 170.0 L75.0 200.0 L55.0 250.0 L40.0 270.0 L45.0 330.0" fill="none" stroke="#aaaaaa" stroke-width="0.8" stroke-linecap="round" stroke-linejoin="round" />
<path d="M90.0 150.0 L120.0 165.0 L160.0 170.0" fill="none" stroke="#aaaaaa" stroke-width="0.8" stroke-linecap="round" stroke-linejoin="round" />
<path d="M130.0 190.0 L150.0 185.0 L165.0 190.0" fill="none" stroke="#aaaaaa" stroke-width="0.8" stroke-linecap="round" stroke-linejoin="round" />
<path d="M95.0 300.0 L130.0 300.0 L170.0 290.0 L200.0 290.0" fill="none" stroke="#aaaaaa" stroke-width="0.8" stroke-linecap="round" stroke-linejoin="round" />
<path d="M150.0 240.0 L140.0 260.0 L120.0 290.0" fill="none" stroke="#aaaaaa" stroke-width="0.8" stroke-linecap="round" stroke-linejoin="round" />
<path d="M0.0 35.0 L40.0 40.0 L60.0 40.0" fill="none" stroke="#aaaaaa" stroke-width="0.8" stroke-linecap="round" stroke-linejoin="round" />
<path d="M60.0 0.0 L62.0 25.0" fill="none" stroke="#aaaaaa" stroke-width="0.8" stroke-linecap="round" stroke-linejoin="round" />
<path d="M300.0 0.0 L310.0 55.0 L316.0 70.0" fill="none" stroke="#aaaaaa" stroke-width="0.8" stroke-linecap="round" stroke-linejoin="round" />
<path d="M400.0 40.0 L440.0 50.0 L470.0 45.0" fill="none" stroke="#aaaaaa" stroke-width="0.8" stroke-linecap="round" stroke-linejoin="round" />
<path d="M518.0 187.0 L560.0 170.0 L582.0 165.0" fill="none" stroke="#aaaaaa" stroke-width="0.8" stroke-linecap="round" stroke-linejoin="round" />
<path d="M140.0 25.0 L153.0 40.0 L150.0 60.0 L140.0 80.0 L138.0 110.0 L145.0 130.0 L150.0 145.0 L165.0 165.0" fill="none" stroke="#9fcbdc" stroke-width="1.8" stroke-linecap="round" stroke-linejoin="round" />
<path d="M310.0 6.0 L316.0 29.0 L294.0 43.0 L296.0 58.0 L312.0 72.0 L328.0 90.0 L349.0 97.0 L353.0 111.0 L365.0 119.0 L376.0 135.0 L383.0 143.0 L390.0 154.0 L411.0 151.0 L424.0 174.0 L429.0 190.0" fill="none" stroke="#9fcbdc" stroke-width="1.8" stroke-linecap="round" stroke-linejoin="round" />
<path d="M316.0 70.0 L357.0 55.0 L400.0 39.0" fill="none" stroke="#9fcbdc" stroke-width="1.8" stroke-linecap="round" stroke-linejoin="round" />
<path d="M0.0 234.0 L12.0 239.0 L24.0 249.0 L43.0 255.0 L51.0 267.0 L65.0 286.0 L78.0 286.0 L94.0 283.0 L106.0 294.0 L114.0 306.0 L112.0 330.0" fill="none" stroke="#9fcbdc" stroke-width="1.8" stroke-linecap="round" stroke-linejoin="round" />
<path d="M78.0 188.0 L90.0 187.0 L106.0 190.0 L118.0 200.0 L141.0 202.0 L161.0 204.0" fill="none" stroke="#9fcbdc" stroke-width="1.8" stroke-linecap="round" stroke-linejoin="round" />
<path d="M227.0 286.0 L259.0 281.0 L286.0 286.0 L302.0 281.0 L318.0 283.0 L337.0 298.0 L353.0 286.0 L376.0 281.0 L400.0 283.0 L430.0 290.0 L455.0 300.0" fill="none" stroke="#9fcbdc" stroke-width="1.8" stroke-linecap="round" stroke-linejoin="round" />
<path d="M447.0 165.0 L451.0 204.0 L459.0 230.0 L478.0 243.0 L484.0 275.0 L492.0 287.0" fill="none" stroke="#9fcbdc" stroke-width="1.8" stroke-linecap="round" stroke-linejoin="round" />
<path d="M400.0 100.0 L420.0 120.0 L430.0 150.0 L447.0 165.0" fill="none" stroke="#9fcbdc" stroke-width="1.8" stroke-linecap="round" stroke-linejoin="round" />
<path d="M0.0 90.0 L10.0 85.0 L20.0 70.0" fill="none" stroke="#9fcbdc" stroke-width="1.8" stroke-linecap="round" stroke-linejoin="round" />
<path d="M40.0 45.0 L60.0 65.0 L75.0 75.0 L90.0 72.0 L120.0 60.0 L172.0 43.0 L200.0 53.0 L225.0 75.0 L269.0 97.0 L315.0 104.0 L328.0 117.0 L340.0 140.0 L347.0 165.0 L353.0 183.0 L362.0 192.0 L394.0 199.0 L429.0 200.0 L447.0 190.0 L469.0 190.0" fill="none" stroke="#777777" stroke-width="1.1" stroke-linecap="round" stroke-linejoin="round" />
<path d="M61.0 72.0 L62.0 90.0 L50.0 118.0 L47.0 135.0 L50.0 155.0 L60.0 170.0" fill="none" stroke="#777777" stroke-width="1.1" stroke-linecap="round" stroke-linejoin="round" />
<path d="M66.0 165.0 L90.0 200.0 L120.0 240.0 L140.0 270.0 L165.0 295.0 L180.0 330.0" fill="none" stroke="#777777" stroke-width="1.1" stroke-linecap="round" stroke-linejoin="round" />
<path d="M353.0 183.0 L355.0 210.0 L350.0 230.0" fill="none" stroke="#777777" stroke-width="1.1" stroke-linecap="round" stroke-linejoin="round" />
<path d="M358.0 189.0 L340.0 228.0 L315.0 266.0 L298.0 296.0 L285.0 330.0" fill="none" stroke="#777777" stroke-width="1.1" stroke-linecap="round" stroke-linejoin="round" />
<path d="M362.0 190.0 L344.0 229.0 L319.0 267.0 L302.0 297.0 L289.0 330.0" fill="none" stroke="#777777" stroke-width="1.1" stroke-linecap="round" stroke-linejoin="round" />
<path d="M396.0 189.0 L430.0 198.0 L469.0 189.0 L503.0 155.0 L559.0 121.0 L604.0 112.0" fill="none" stroke="#777777" stroke-width="1.1" stroke-linecap="round" stroke-linejoin="round" />
<path d="M600.0 240.0 L590.0 280.0 L585.0 330.0" fill="none" stroke="#777777" stroke-width="1.1" stroke-linecap="round" stroke-linejoin="round" />
<path d="M394.0 199.0 L400.0 228.0 L396.0 288.0 L400.0 330.0" fill="none" stroke="#777777" stroke-width="1.1" stroke-linecap="round" stroke-linejoin="round" />
<path d="M38.0 0.0 L40.0 22.0 L48.0 35.0 L60.0 47.0 L75.0 55.0 L100.0 58.0 L115.0 55.0 L140.0 47.0 L168.0 42.0 L185.0 44.0 L200.0 47.0 L229.0 46.0 L251.0 65.0 L274.0 78.0 L292.0 80.0 L310.0 84.0 L325.0 96.0 L337.0 100.0 L357.0 96.0 L376.0 92.0 L400.0 92.0 L420.0 94.0 L443.0 110.0 L455.0 118.0 L465.0 129.0 L474.0 153.0 L492.0 230.0" fill="none" stroke="#e8a65a" stroke-width="2.8" stroke-linecap="round" stroke-linejoin="round" />
<path d="M229.0 46.0 L239.0 56.0 L274.0 72.0" fill="none" stroke="#e8a65a" stroke-width="2.8" stroke-linecap="round" stroke-linejoin="round" />
<path d="M216.0 63.0 L239.0 82.0 L274.0 96.0 L310.0 102.0 L325.0 106.0 L341.0 121.0 L366.0 141.0 L386.0 165.0 L392.0 180.0" fill="none" stroke="#e8a65a" stroke-width="2.8" stroke-linecap="round" stroke-linejoin="round" />
<path d="M325.0 102.0 L310.0 114.0 L300.0 133.0 L302.0 165.0 L306.0 190.0 L314.0 212.0 L296.0 243.0 L284.0 263.0 L274.0 279.0 L269.0 306.0 L266.0 330.0" fill="none" stroke="#e8a65a" stroke-width="2.8" stroke-linecap="round" stroke-linejoin="round" />
<path d="M174.0 145.0 L200.0 155.0 L259.0 153.0 L310.0 149.0 L341.0 155.0 L361.0 157.0 L385.0 160.0" fill="none" stroke="#e8a65a" stroke-width="2.8" stroke-linecap="round" stroke-linejoin="round" />
<path d="M363.0 0.0 L359.0 39.0 L368.0 74.0 L376.0 92.0" fill="none" stroke="#e8a65a" stroke-width="2.8" stroke-linecap="round" stroke-linejoin="round" />
<path d="M490.0 25.0 L459.0 94.0 L445.0 110.0 L429.0 133.0 L412.0 165.0 L400.0 185.0" fill="none" stroke="#e8a65a" stroke-width="2.8" stroke-linecap="round" stroke-linejoin="round" />
<path d="M476.0 2.0 L557.0 13.0" fill="none" stroke="#e8a65a" stroke-width="2.8" stroke-linecap="round" stroke-linejoin="round" />
<path d="M561.0 69.0 L510.0 96.0 L459.0 116.0 L427.0 133.0 L400.0 153.0 L385.0 160.0" fill="none" stroke="#e8a65a" stroke-width="2.8" stroke-linecap="round" stroke-linejoin="round" />
<path d="M310.0 218.0 L353.0 187.0 L375.0 180.0" fill="none" stroke="#e8a65a" stroke-width="2.8" stroke-linecap="round" stroke-linejoin="round" />
<path d="M318.0 214.0 L349.0 239.0 L400.0 240.0 L449.0 232.0 L494.0 204.0 L518.0 187.0 L535.0 218.0 L521.0 249.0 L512.0 271.0 L504.0 282.0 L498.0 330.0" fill="none" stroke="#e8a65a" stroke-width="2.8" stroke-linecap="round" stroke-linejoin="round" />
<path d="M341.0 243.0 L363.0 273.0 L363.0 292.0 L357.0 330.0" fill="none" stroke="#e8a65a" stroke-width="2.8" stroke-linecap="round" stroke-linejoin="round" />
<path d="M453.0 165.0 L492.0 230.0 L521.0 249.0 L568.0 269.0 L590.0 275.0" fill="none" stroke="#e8a65a" stroke-width="2.8" stroke-linecap="round" stroke-linejoin="round" />
<path d="M451.0 230.0 L474.0 291.0 L496.0 279.0 L525.0 292.0 L533.0 303.0 L553.0 306.0" fill="none" stroke="#e8a65a" stroke-width="2.8" stroke-linecap="round" stroke-linejoin="round" />
<path d="M408.0 170.0 L408.0 239.0 L408.0 302.0 L416.0 330.0" fill="none" stroke="#e8a65a" stroke-width="2.8" stroke-linecap="round" stroke-linejoin="round" />
<path d="M400.0 204.0 L425.0 204.0 L453.0 222.0" fill="none" stroke="#e8a65a" stroke-width="2.8" stroke-linecap="round" stroke-linejoin="round" />
<path d="M449.0 111.0 L459.0 135.0 L474.0 155.0 L497.0 155.0 L506.0 130.0 L511.0 96.0 L510.0 70.0" fill="none" stroke="#e8a65a" stroke-width="2.8" stroke-linecap="round" stroke-linejoin="round" />
<path d="M497.0 155.0 L519.0 188.0 L527.0 208.0" fill="none" stroke="#e8a65a" stroke-width="2.8" stroke-linecap="round" stroke-linejoin="round" />
<path d="M392.0 180.0 L410.0 175.0 L430.0 170.0 L453.0 165.0" fill="none" stroke="#e8a65a" stroke-width="2.8" stroke-linecap="round" stroke-linejoin="round" />
<path d="M365.0 136.0 L376.0 129.0 L401.0 129.0 L415.0 133.0 L420.0 147.0 L426.0 158.0 L440.0 170.0" fill="none" stroke="#e8a65a" stroke-width="2.8" stroke-linecap="round" stroke-linejoin="round" />
<path d="M376.0 92.0 L390.0 110.0 L401.0 129.0 L395.0 145.0 L387.0 158.0" fill="none" stroke="#e8a65a" stroke-width="2.8" stroke-linecap="round" stroke-linejoin="round" />
<path d="M420.0 94.0 L404.0 129.0 L387.0 158.0" fill="none" stroke="#e8a65a" stroke-width="2.8" stroke-linecap="round" stroke-linejoin="round" />
<path d="M38.0 0.0 L40.0 22.0 L48.0 35.0 L60.0 47.0 L75.0 55.0 L100.0 58.0 L115.0 55.0 L140.0 47.0 L168.0 42.0 L185.0 44.0 L200.0 47.0 L229.0 46.0 L251.0 65.0 L274.0 78.0 L292.0 80.0 L310.0 84.0 L325.0 96.0 L337.0 100.0 L357.0 96.0 L376.0 92.0 L400.0 92.0 L420.0 94.0 L443.0 110.0 L455.0 118.0 L465.0 129.0 L474.0 153.0 L492.0 230.0" fill="none" stroke="#f4b86c" stroke-width="2.0" stroke-linecap="round" stroke-linejoin="round" />
<path d="M229.0 46.0 L239.0 56.0 L274.0 72.0" fill="none" stroke="#f4b86c" stroke-width="2.0" stroke-linecap="round" stroke-linejoin="round" />
<path d="M216.0 63.0 L239.0 82.0 L274.0 96.0 L310.0 102.0 L325.0 106.0 L341.0 121.0 L366.0 141.0 L386.0 165.0 L392.0 180.0" fill="none" stroke="#f4b86c" stroke-width="2.0" stroke-linecap="round" stroke-linejoin="round" />
<path d="M325.0 102.0 L310.0 114.0 L300.0 133.0 L302.0 165.0 L306.0 190.0 L314.0 212.0 L296.0 243.0 L284.0 263.0 L274.0 279.0 L269.0 306.0 L266.0 330.0" fill="none" stroke="#f4b86c" stroke-width="2.0" stroke-linecap="round" stroke-linejoin="round" />
<path d="M174.0 145.0 L200.0 155.0 L259.0 153.0 L310.0 149.0 L341.0 155.0 L361.0 157.0 L385.0 160.0" fill="none" stroke="#f4b86c" stroke-width="2.0" stroke-linecap="round" stroke-linejoin="round" />
<path d="M363.0 0.0 L359.0 39.0 L368.0 74.0 L376.0 92.0" fill="none" stroke="#f4b86c" stroke-width="2.0" stroke-linecap="round" stroke-linejoin="round" />
<path d="M490.0 25.0 L459.0 94.0 L445.0 110.0 L429.0 133.0 L412.0 165.0 L400.0 185.0" fill="none" stroke="#f4b86c" stroke-width="2.0" stroke-linecap="round" stroke-linejoin="round" />
<path d="M476.0 2.0 L557.0 13.0" fill="none" stroke="#f4b86c" stroke-width="2.0" stroke-linecap="round" stroke-linejoin="round" />
<path d="M561.0 69.0 L510.0 96.0 L459.0 116.0 L427.0 133.0 L400.0 153.0 L385.0 160.0" fill="none" stroke="#f4b86c" stroke-width="2.0" stroke-linecap="round" stroke-linejoin="round" />
<path d="M310.0 218.0 L353.0 187.0 L375.0 180.0" fill="none" stroke="#f4b86c" stroke-width="2.0" stroke-linecap="round" stroke-linejoin="round" />
<path d="M318.0 214.0 L349.0 239.0 L400.0 240.0 L449.0 232.0 L494.0 204.0 L518.0 187.0 L535.0 218.0 L521.0 249.0 L512.0 271.0 L504.0 282.0 L498.0 330.0" fill="none" stroke="#f4b86c" stroke-width="2.0" stroke-linecap="round" stroke-linejoin="round" />
<path d="M341.0 243.0 L363.0 273.0 L363.0 292.0 L357.0 330.0" fill="none" stroke="#f4b86c" stroke-width="2.0" stroke-linecap="round" stroke-linejoin="round" />
<path d="M453.0 165.0 L492.0 230.0 L521.0 249.0 L568.0 269.0 L590.0 275.0" fill="none" stroke="#f4b86c" stroke-width="2.0" stroke-linecap="round" stroke-linejoin="round" />
<path d="M451.0 230.0 L474.0 291.0 L496.0 279.0 L525.0 292.0 L533.0 303.0 L553.0 306.0" fill="none" stroke="#f4b86c" stroke-width="2.0" stroke-linecap="round" stroke-linejoin="round" />
<path d="M408.0 170.0 L408.0 239.0 L408.0 302.0 L416.0 330.0" fill="none" stroke="#f4b86c" stroke-width="2.0" stroke-linecap="round" stroke-linejoin="round" />
<path d="M400.0 204.0 L425.0 204.0 L453.0 222.0" fill="none" stroke="#f4b86c" stroke-width="2.0" stroke-linecap="round" stroke-linejoin="round" />
<path d="M449.0 111.0 L459.0 135.0 L474.0 155.0 L497.0 155.0 L506.0 130.0 L511.0 96.0 L510.0 70.0" fill="none" stroke="#f4b86c" stroke-width="2.0" stroke-linecap="round" stroke-linejoin="round" />
<path d="M497.0 155.0 L519.0 188.0 L527.0 208.0" fill="none" stroke="#f4b86c" stroke-width="2.0" stroke-linecap="round" stroke-linejoin="round" />
<path d="M392.0 180.0 L410.0 175.0 L430.0 170.0 L453.0 165.0" fill="none" stroke="#f4b86c" stroke-width="2.0" stroke-linecap="round" stroke-linejoin="round" />
<path d="M365.0 136.0 L376.0 129.0 L401.0 129.0 L415.0 133.0 L420.0 147.0 L426.0 158.0 L440.0 170.0" fill="none" stroke="#f4b86c" stroke-width="2.0" stroke-linecap="round" stroke-linejoin="round" />
<path d="M376.0 92.0 L390.0 110.0 L401.0 129.0 L395.0 145.0 L387.0 158.0" fill="none" stroke="#f4b86c" stroke-width="2.0" stroke-linecap="round" stroke-linejoin="round" />
<path d="M420.0 94.0 L404.0 129.0 L387.0 158.0" fill="none" stroke="#f4b86c" stroke-width="2.0" stroke-linecap="round" stroke-linejoin="round" />
<path d="M400.0 0.0 L310.0 4.0 L259.0 12.0 L229.0 45.0 L216.0 63.0 L200.0 84.0 L182.0 125.0 L172.0 150.0 L172.0 165.0 L174.0 177.0 L182.0 204.0 L194.0 239.0 L200.0 263.0 L214.0 294.0 L229.0 306.0 L263.0 314.0 L310.0 324.0 L357.0 330.0" fill="none" stroke="#ee8466" stroke-width="2.6" stroke-linecap="round" stroke-linejoin="round" />
<path d="M463.0 8.0 L490.0 23.0 L561.0 69.0 L570.0 110.0 L582.0 165.0 L594.0 204.0 L588.0 243.0 L570.0 275.0 L553.0 302.0 L533.0 330.0" fill="none" stroke="#ee8466" stroke-width="2.6" stroke-linecap="round" stroke-linejoin="round" />
<path d="M0.0 127.0 L30.0 125.0 L60.0 131.0 L90.0 145.0 L110.0 152.0 L150.0 146.0 L174.0 144.0" fill="none" stroke="#ee8466" stroke-width="2.6" stroke-linecap="round" stroke-linejoin="round" />
<path d="M561.0 69.0 L604.0 49.0" fill="none" stroke="#ee8466" stroke-width="2.6" stroke-linecap="round" stroke-linejoin="round" />
<path d="M510.0 16.0 L521.0 0.0" fill="none" stroke="#ee8466" stroke-width="2.6" stroke-linecap="round" stroke-linejoin="round" />
<path d="M400.0 0.0 L463.0 8.0" fill="none" stroke="#ee8466" stroke-width="2.6" stroke-linecap="round" stroke-linejoin="round" />
<g fill="none" stroke="#b47cc4" stroke-width="1.8" stroke-dasharray="2.5 2.5">
<path d="M400.0 1.5 L310.0 5.5 L259.0 13.5 L229.0 46.5 L216.0 64.5 L200.0 85.5 L182.0 126.5 L175.0 140.0"/>
<path d="M174.0 177.0 L182.0 204.0 L194.0 239.0 L200.0 263.0 L214.0 294.0 L229.0 306.0 L263.0 314.0 L310.0 324.0 L357.0 330.0"/>
<path d="M463.0 9.5 L490.0 24.5 L561.0 70.5"/>
<path d="M588.0 243.0 L570.0 275.0 L553.0 302.0 L533.0 330.0"/>
<path d="M161.0 165.0 L163.0 204.0 L180.0 196.0 L176.0 216.0 L165.0 220.0 L165.0 235.0 L125.0 243.0 L137.0 259.0 L161.0 271.0 L165.0 251.0 L188.0 251.0 L192.0 220.0"/>
<path d="M162.0 168.0 L168.0 170.0 L175.0 170.0"/>
<path d="M500.0 6.0 L505.0 18.0 L522.0 22.0 L532.0 15.0"/>
<path d="M540.0 45.0 L550.0 40.0 L560.0 48.0"/>
<path d="M604.0 170.0 L590.0 180.0"/>
</g>
<g fill="#c77f3b">
<path d="M205 28 L210 20 L215 28 Z"/>
<path d="M216 23 L221 15 L226 23 Z"/>
<path d="M218 31 L223 23 L228 31 Z"/>
<path d="M207 35 L212 27 L217 35 Z"/>
<path d="M232 15 L237 7 L242 15 Z"/>
<path d="M247 4 L252 -4 L257 4 Z"/>
<path d="M41 318 L46 310 L51 318 Z"/>
<path d="M250 215 L255 207 L260 215 Z"/>
<path d="M261 204 L266 196 L271 204 Z"/>
<path d="M417 304 L422 296 L427 304 Z"/>
<path d="M237 150 L242 142 L247 150 Z"/>
<path d="M1 8 L6 0 L11 8 Z"/>
<path d="M3 20 L8 12 L13 20 Z"/>
</g>
<g font-family="Liberation Sans" font-size="11" fill="#5a3a2a">
<rect x="83.5" y="51.5" width="26" height="16" rx="3" fill="#f6e4c8" stroke="#d9b88c"/><text x="96.5" y="63.5" text-anchor="middle">P28</text>
<rect x="81.5" y="137.5" width="21" height="16" rx="3" fill="#f5d8cc" stroke="#d9a090"/><text x="92.0" y="149.5" text-anchor="middle">M6</text>
<rect x="161.5" y="159.5" width="21" height="16" rx="3" fill="#f5d8cc" stroke="#d9a090"/><text x="172.0" y="171.5" text-anchor="middle">M9</text>
<rect x="252.5" y="304.5" width="21" height="16" rx="3" fill="#f5d8cc" stroke="#d9a090"/><text x="263.0" y="316.5" text-anchor="middle">P1</text>
<rect x="584.5" y="206.5" width="21" height="16" rx="3" fill="#f5d8cc" stroke="#d9a090"/><text x="595.0" y="218.5" text-anchor="middle">M9</text>
<rect x="437.5" y="-9.5" width="39" height="16" rx="3" fill="#f6e4c8" stroke="#d9b88c"/><text x="457.0" y="2.5" text-anchor="middle">H9031</text>
</g>
<g font-family="Liberation Sans">
<text x="164" y="61" font-size="12" fill="#333" stroke="#fff" stroke-width="3" stroke-opacity="0.8" paint-order="stroke">Ждановичи</text>
<text x="373" y="173" font-size="15" fill="#222" stroke="#fff" stroke-width="3" stroke-opacity="0.8" paint-order="stroke">Минск</text>
<text x="417" y="218" font-size="11" font-style="italic" fill="#7b4e8c" stroke="#fff" stroke-width="2" stroke-opacity="0.8" paint-order="stroke">Минск</text>
</g>
<rect x="9" y="9" width="32" height="63" rx="3" fill="#fff" stroke="rgba(0,0,0,0.22)" stroke-width="2"/>
<line x1="10" y1="40.5" x2="40" y2="40.5" stroke="#ccc"/>
<path d="M19 25 H31 M25 19 V31" stroke="#000" stroke-width="2.4"/>
<path d="M19 56 H31" stroke="#000" stroke-width="2.4"/>
<rect x="557" y="10" width="36" height="36" rx="4" fill="#fff" stroke="rgba(0,0,0,0.2)" stroke-width="1.5"/>
<path d="M564 34 L575 39 L586 34 L575 29 Z" fill="#9e9e9e" stroke="#777" stroke-width="0.6"/>
<path d="M564 30 L575 35 L586 30 L575 25 Z" fill="#b5b5b5" stroke="#777" stroke-width="0.6"/>
<path d="M564 26 L575 31 L586 26 L575 21 Z" fill="#d5d5d5" stroke="#888" stroke-width="0.6"/>
</svg></div>

  <!-- client card -->
  <div class="card" style="left:669px;top:446px;width:628px;height:310px"></div>
  <div class="t hdr" style="left:681px;top:483px;transform:scaleX(0.86)">КЛИЕНТ</div>
  <div class="t lbl" style="left:681px;top:511px;letter-spacing:0">Имя клиента</div>
  <div class="ul" style="left:681px;top:557px;width:604px"></div>
  <div class="t lbl" style="left:681px;top:589px;color:#a6a6a6;letter-spacing:0">Телефон 1</div>
  <div class="t val" style="left:681px;top:612px;color:#c8c8c8;letter-spacing:-0.5px">+7XXXXXXXXXX</div>
  <div class="ul" style="left:681px;top:635px;width:254px;background:none;border-top:1px dotted #a0a0a0"></div>
  <div class="cb" style="left:947px;top:618px"></div>
  <div class="t lbl" style="left:989px;top:589px;color:#a6a6a6;letter-spacing:0">Телефон 2</div>
  <div class="t val" style="left:989px;top:612px;color:#c8c8c8;letter-spacing:-0.5px">+7XXXXXXXXXX</div>
  <div class="ul" style="left:989px;top:635px;width:254px;background:none;border-top:1px dotted #a0a0a0"></div>
  <div class="cb" style="left:1255px;top:618px"></div>
  <div class="t lbl" style="left:681px;top:667px;letter-spacing:0">Email</div>
  <div class="t val" style="left:681px;top:689px;color:#a0a0a0;letter-spacing:0">client@e.mail</div>
  <div class="ul" style="left:681px;top:713px;width:562px"></div>
  <div class="cb" style="left:1255px;top:696px"></div>
</div></div>
<!-- dialog scrollbar -->
<div style="position:absolute;left:1310px;top:68px;width:6px;height:694px;background:#e6e6e6"></div>
<div style="position:absolute;left:1310px;top:68px;width:6px;height:582px;background:#a8a8a8;border-radius:3px"></div>
<!-- buttons -->
<div class="btn" style="left:841px;top:775px;width:92px;height:36px;color:#212121;background:#fff;box-shadow:0 3px 1px -2px rgba(0,0,0,.2),0 2px 2px 0 rgba(0,0,0,.14),0 1px 5px 0 rgba(0,0,0,.12)"><span style="transform:scaleX(0.91)">ОТМЕНА</span></div>
<div class="btn" style="left:941px;top:775px;width:238px;height:36px;color:#a6a6a6;background:#e0e0e0"><span style="transform:scaleX(0.95)">СОХРАНИТЬ И ПРОДОЛЖИТЬ</span></div>
<div class="btn" style="left:1187px;top:775px;width:117px;height:36px;color:#a6a6a6;background:#e0e0e0"><span style="transform:scaleX(0.93)">СОХРАНИТЬ</span></div>
</body></html>
